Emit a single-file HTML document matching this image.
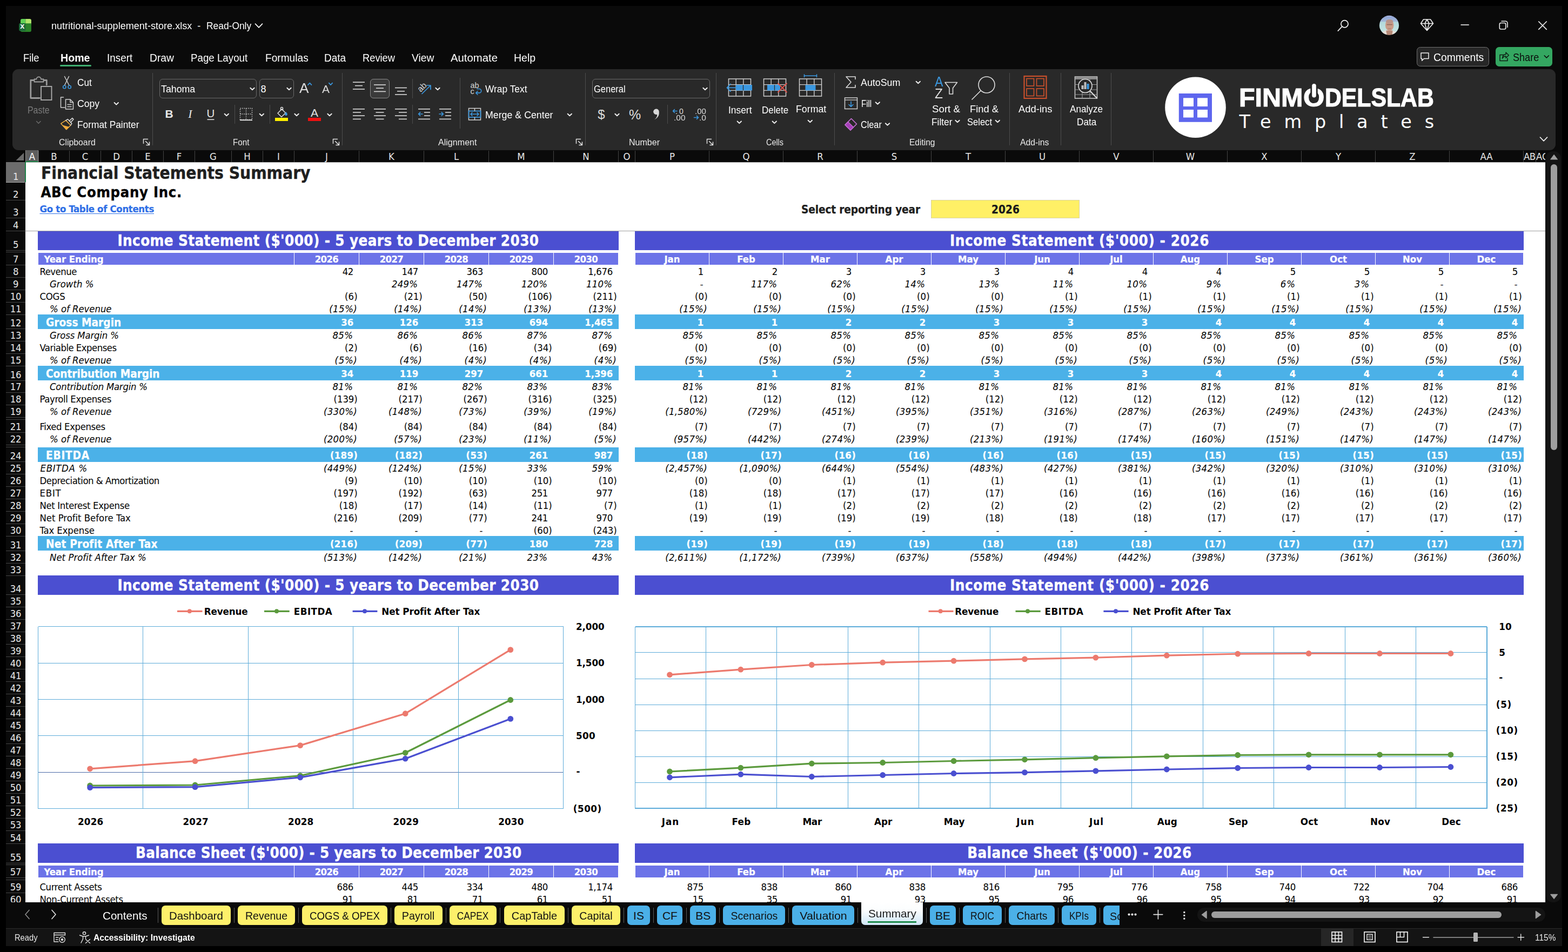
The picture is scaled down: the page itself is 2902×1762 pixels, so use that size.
<!DOCTYPE html>
<html lang="en"><head><meta charset="utf-8"><title>nutritional-supplement-store.xlsx - Excel</title>
<style>
html,body{margin:0;padding:0;background:#000;}
body{width:2902px;height:1762px;position:relative;overflow:hidden;font-family:"Liberation Sans", sans-serif;}
body div,body svg{position:absolute;box-sizing:border-box;}
svg{overflow:visible;}
.t{white-space:pre;line-height:1;font-family:"Liberation Sans", sans-serif;}
.h{font-family:"DejaVu Sans Condensed", "DejaVu Sans", "Liberation Sans", sans-serif;}.d{font-family:"DejaVu Sans", "Liberation Sans", sans-serif;}.s{font-family:"Liberation Serif", serif;}
#app{left:0;top:0;width:2902px;height:1762px;overflow:hidden;background:#000;}
</style></head><body>
<div id="app">
<div style="left:11px;top:11px;width:2880px;height:1739.5px;background:#0a0a0a;"></div>
<div class="t" style="top:38.80px;font-size:18px;color:#fff;left:95.00px;transform:scaleX(1.0045);transform-origin:0 50%;">nutritional-supplement-store.xlsx</div>
<div class="t" style="top:38.80px;font-size:18px;color:#fff;left:365.30px;">-</div>
<div class="t" style="top:38.80px;font-size:18px;color:#fff;left:381.80px;transform:scaleX(0.9669);transform-origin:0 50%;">Read-Only</div>
<div class="t" style="top:96.80px;font-size:20px;color:#fff;left:42.50px;transform:scaleX(0.9152);transform-origin:0 50%;">File</div>
<div class="t" style="top:96.80px;font-size:20px;color:#fff;left:111.80px;font-weight:bold;transform:scaleX(0.9806);transform-origin:0 50%;">Home</div>
<div class="t" style="top:96.80px;font-size:20px;color:#fff;left:198.30px;transform:scaleX(0.9434);transform-origin:0 50%;">Insert</div>
<div class="t" style="top:96.80px;font-size:20px;color:#fff;left:277.00px;transform:scaleX(0.9642);transform-origin:0 50%;">Draw</div>
<div class="t" style="top:96.80px;font-size:20px;color:#fff;left:353.30px;transform:scaleX(0.9365);transform-origin:0 50%;">Page Layout</div>
<div class="t" style="top:96.80px;font-size:20px;color:#fff;left:491.30px;transform:scaleX(0.9561);transform-origin:0 50%;">Formulas</div>
<div class="t" style="top:96.80px;font-size:20px;color:#fff;left:600.30px;transform:scaleX(0.9515);transform-origin:0 50%;">Data</div>
<div class="t" style="top:96.80px;font-size:20px;color:#fff;left:671.30px;transform:scaleX(0.9149);transform-origin:0 50%;">Review</div>
<div class="t" style="top:96.80px;font-size:20px;color:#fff;left:762.00px;transform:scaleX(0.9605);transform-origin:0 50%;">View</div>
<div class="t" style="top:96.80px;font-size:20px;color:#fff;left:834.30px;transform:scaleX(1.0162);transform-origin:0 50%;">Automate</div>
<div class="t" style="top:96.80px;font-size:20px;color:#fff;left:951.30px;transform:scaleX(0.9771);transform-origin:0 50%;">Help</div>
<div style="left:111px;top:120px;width:58px;height:3.2px;background:#3fae70;border-radius:2px;"></div>
<div style="left:2621.5px;top:87.2px;width:134px;height:35.5px;background:#272727;border:1px solid #707070;border-radius:6.5px;"></div>
<div class="t" style="top:96.50px;font-size:19.5px;color:#fff;left:2652.80px;transform:scaleX(0.9885);transform-origin:0 50%;">Comments</div>
<div style="left:2768px;top:87px;width:105px;height:35.7px;background:#34a761;border-radius:6.5px;"></div>
<div class="t" style="top:96.50px;font-size:19.5px;color:#0b0b0b;left:2799.80px;transform:scaleX(0.9261);transform-origin:0 50%;">Share</div>
<div style="left:23px;top:128px;width:2856px;height:150px;background:#292929;border-radius:11px;"></div>
<div class="t" style="top:194.50px;font-size:18px;color:#7a7a7a;left:51.30px;transform:scaleX(0.8842);transform-origin:0 50%;">Paste</div>
<div class="t" style="top:143.80px;font-size:18px;color:#ffffff;left:142.50px;transform:scaleX(0.9566);transform-origin:0 50%;">Cut</div>
<div class="t" style="top:183.30px;font-size:18px;color:#ffffff;left:142.50px;transform:scaleX(0.9755);transform-origin:0 50%;">Copy</div>
<div class="t" style="top:222.30px;font-size:18px;color:#ffffff;left:142.50px;transform:scaleX(0.9618);transform-origin:0 50%;">Format Painter</div>
<div class="t" style="top:255.00px;font-size:17px;color:#e8e8e8;left:109.30px;transform:scaleX(0.9304);transform-origin:0 50%;">Clipboard</div>
<div style="left:281.9px;top:135px;width:1.3px;height:134px;background:#4d4d4d;"></div>
<div style="left:295.3px;top:146.3px;width:180px;height:35.5px;background:#292929;border:1px solid #6a6a6a;border-radius:6px;"></div>
<div class="t" style="top:156.30px;font-size:18px;color:#ffffff;left:298.30px;transform:scaleX(0.9868);transform-origin:0 50%;">Tahoma</div>
<div style="left:479.5px;top:146.3px;width:64px;height:35.5px;background:#292929;border:1px solid #6a6a6a;border-radius:6px;"></div>
<div class="t" style="top:156.30px;font-size:18px;color:#ffffff;left:482.50px;">8</div>
<div class="t" style="top:150.50px;font-size:25.5px;color:#dcdcdc;left:554.00px;transform:scaleX(1.0285);transform-origin:0 50%;">A</div>
<div class="t" style="top:153.50px;font-size:21px;color:#dcdcdc;left:595.50px;transform:scaleX(0.9989);transform-origin:0 50%;">A</div>
<div class="t" style="top:200.00px;font-size:21px;color:#e8e8e8;left:-287.00px;width:1200px;text-align:center;font-weight:bold;">B</div>
<div class="t" style="left:-248px;width:1200px;text-align:center;top:199.74px;font-size:22px;color:#e8e8e8;font-family:'Liberation Serif',serif;font-style:italic;">I</div>
<div class="t" style="top:200.30px;font-size:20.5px;color:#e8e8e8;left:-210.00px;width:1200px;text-align:center;">U</div>
<div style="left:433.9px;top:194px;width:1.3px;height:35px;background:#4d4d4d;"></div>
<div style="left:498.7px;top:194px;width:1.3px;height:35px;background:#4d4d4d;"></div>
<div style="left:509px;top:218.2px;width:24px;height:5.6px;background:#ffee00;"></div>
<div class="t" style="top:198.00px;font-size:21px;color:#e0e0e0;left:-18.00px;width:1200px;text-align:center;">A</div>
<div style="left:570px;top:218.2px;width:24px;height:5.6px;background:#ee1111;"></div>
<div class="t" style="top:255.00px;font-size:17px;color:#e8e8e8;left:430.50px;transform:scaleX(0.8962);transform-origin:0 50%;">Font</div>
<div style="left:632.6999999999999px;top:135px;width:1.3px;height:134px;background:#4d4d4d;"></div>
<div style="left:685.3px;top:146.3px;width:35.5px;height:35.5px;background:#3a3a3a;border:1px solid #8a8a8a;border-radius:6px;"></div>
<div style="left:762.6999999999999px;top:146px;width:1.3px;height:36px;background:#4d4d4d;"></div>
<div class="t" style="top:153.00px;font-size:15.5px;color:#d6d6d6;left:181.50px;width:1200px;text-align:center;transform:rotate(-45deg);transform-origin:50% 60%;">ab</div>
<div style="left:850.6999999999999px;top:144px;width:1.3px;height:93.5px;background:#4d4d4d;"></div>
<div class="t" style="top:151.30px;font-size:14.5px;color:#d6d6d6;left:870.50px;">ab</div>
<div class="t" style="top:162.30px;font-size:14.5px;color:#d6d6d6;left:870.50px;">c</div>
<div class="t" style="top:156.30px;font-size:18px;color:#ffffff;left:897.50px;transform:scaleX(0.9642);transform-origin:0 50%;">Wrap Text</div>
<div style="left:762.6999999999999px;top:194px;width:1.3px;height:35px;background:#4d4d4d;"></div>
<div class="t" style="top:204.20px;font-size:18px;color:#ffffff;left:897.50px;transform:scaleX(0.9877);transform-origin:0 50%;">Merge &amp; Center</div>
<div class="t" style="top:255.00px;font-size:17px;color:#e8e8e8;left:810.50px;transform:scaleX(0.9456);transform-origin:0 50%;">Alignment</div>
<div style="left:1082.9px;top:135px;width:1.3px;height:134px;background:#4d4d4d;"></div>
<div style="left:1096.2px;top:146.3px;width:217.5px;height:35.5px;background:#292929;border:1px solid #6a6a6a;border-radius:6px;"></div>
<div class="t" style="top:156.30px;font-size:18px;color:#ffffff;left:1099.40px;transform:scaleX(0.9150);transform-origin:0 50%;">General</div>
<div class="t" style="top:200.00px;font-size:24px;color:#dcdcdc;left:513.00px;width:1200px;text-align:center;">$</div>
<div class="t" style="top:199.50px;font-size:25px;color:#dcdcdc;left:575.00px;width:1200px;text-align:center;">%</div>
<div style="left:1234.9px;top:194px;width:1.3px;height:35px;background:#4d4d4d;"></div>
<div class="t" style="top:198.50px;font-size:14px;color:#dcdcdc;left:1250.00px;letter-spacing:3.156px;">.0</div>
<div class="t" style="top:210.50px;font-size:14px;color:#dcdcdc;left:1246.50px;transform:scaleX(1.1043);transform-origin:0 50%;">.00</div>
<div class="t" style="top:198.50px;font-size:14px;color:#dcdcdc;left:1286.00px;transform:scaleX(1.0787);transform-origin:0 50%;">.00</div>
<div class="t" style="top:210.50px;font-size:14px;color:#dcdcdc;left:1294.00px;transform:scaleX(1.1123);transform-origin:0 50%;">.0</div>
<div class="t" style="top:255.00px;font-size:17px;color:#e8e8e8;left:1163.50px;transform:scaleX(0.9426);transform-origin:0 50%;">Number</div>
<div style="left:1325.1000000000001px;top:135px;width:1.3px;height:134px;background:#4d4d4d;"></div>
<div class="t" style="top:194.50px;font-size:18.5px;color:#ffffff;left:1347.50px;transform:scaleX(0.9399);transform-origin:0 50%;">Insert</div>
<div class="t" style="top:194.50px;font-size:18.5px;color:#ffffff;left:1409.50px;transform:scaleX(0.9218);transform-origin:0 50%;">Delete</div>
<div class="t" style="top:193.00px;font-size:18.5px;color:#ffffff;left:1472.50px;transform:scaleX(0.9609);transform-origin:0 50%;">Format</div>
<div class="t" style="top:255.00px;font-size:17px;color:#e8e8e8;left:1418.00px;transform:scaleX(0.8466);transform-origin:0 50%;">Cells</div>
<div style="left:1543.9px;top:135px;width:1.3px;height:134px;background:#4d4d4d;"></div>
<div class="t" style="top:143.80px;font-size:18px;color:#ffffff;left:1593.00px;transform:scaleX(0.9899);transform-origin:0 50%;">AutoSum</div>
<div class="t" style="top:182.50px;font-size:18px;color:#ffffff;left:1593.80px;transform:scaleX(0.8348);transform-origin:0 50%;">Fill</div>
<div class="t" style="top:222.00px;font-size:18px;color:#ffffff;left:1593.00px;transform:scaleX(0.9020);transform-origin:0 50%;">Clear</div>
<div class="t" style="top:139.00px;font-size:25px;color:#3b98e0;left:1729.50px;transform:scaleX(0.9288);transform-origin:0 50%;">A</div>
<div class="t" style="top:160.50px;font-size:25px;color:#dcdcdc;left:1729.50px;transform:scaleX(0.9816);transform-origin:0 50%;">Z</div>
<div class="t" style="top:193.00px;font-size:18.5px;color:#ffffff;left:1725.00px;transform:scaleX(1.0112);transform-origin:0 50%;">Sort &amp;</div>
<div class="t" style="top:216.80px;font-size:18.5px;color:#ffffff;left:1724.00px;transform:scaleX(0.9362);transform-origin:0 50%;">Filter</div>
<div class="t" style="top:193.00px;font-size:18.5px;color:#ffffff;left:1795.00px;transform:scaleX(0.9912);transform-origin:0 50%;">Find &amp;</div>
<div class="t" style="top:216.80px;font-size:18.5px;color:#ffffff;left:1790.00px;transform:scaleX(0.8946);transform-origin:0 50%;">Select</div>
<div class="t" style="top:255.00px;font-size:17px;color:#e8e8e8;left:1682.50px;transform:scaleX(0.9137);transform-origin:0 50%;">Editing</div>
<div style="left:1867.7px;top:135px;width:1.3px;height:134px;background:#4d4d4d;"></div>
<div class="t" style="top:193.00px;font-size:18.5px;color:#ffffff;left:1885.00px;transform:scaleX(0.9963);transform-origin:0 50%;">Add-ins</div>
<div class="t" style="top:255.00px;font-size:17px;color:#e8e8e8;left:1888.00px;transform:scaleX(0.9282);transform-origin:0 50%;">Add-ins</div>
<div style="left:1962.7px;top:135px;width:1.3px;height:134px;background:#4d4d4d;"></div>
<div class="t" style="top:193.00px;font-size:18.5px;color:#ffffff;left:1980.00px;transform:scaleX(0.9267);transform-origin:0 50%;">Analyze</div>
<div class="t" style="top:216.80px;font-size:18.5px;color:#ffffff;left:1992.50px;transform:scaleX(0.9289);transform-origin:0 50%;">Data</div>
<div style="left:2055.9px;top:135px;width:1.3px;height:134px;background:#4d4d4d;"></div>
<div class="t" style="top:157.00px;font-size:48px;color:#fff;left:2293.30px;font-weight:bold;transform:scaleX(1.0101);transform-origin:0 50%;-webkit-text-stroke:1.1px #fff;">FINM</div>
<div class="t" style="top:157.00px;font-size:48px;color:#fff;left:2412.30px;font-weight:bold;transform:scaleX(1.0551);transform-origin:0 50%;-webkit-text-stroke:1.1px #fff;">O</div>
<div class="t" style="top:157.00px;font-size:48px;color:#fff;left:2452.20px;font-weight:bold;transform:scaleX(0.8903);transform-origin:0 50%;-webkit-text-stroke:1.1px #fff;">DELSLAB</div>
<div class="t d" style="top:209.00px;font-size:33.5px;color:#fff;left:2293.50px;letter-spacing:23.797px;">Templates</div>
<svg style="left:0px;top:0px;pointer-events:none;" width="2902" height="1762" viewBox="0 0 2902 1762"><path d="M38 46 V37.7 a2.8 2.8 0 0 1 2.8 -2.8 H47.3 V46 Z" fill="#5fd155"/><path d="M47.3 34.9 H55.1 a2.8 2.8 0 0 1 2.8 2.8 V46 H47.3 Z" fill="#b3e66c"/><path d="M38 43.3 H57.9 V56.2 a2.7 2.7 0 0 1 -2.7 2.7 H40.7 a2.7 2.7 0 0 1 -2.7 -2.7 Z" fill="#2b8429"/><rect x="35.1" y="42.9" width="12.5" height="14.5" rx="2.4" fill="#1d6a39"/><path d="M472.5 44.2 L479.0 50.8 L485.5 44.2" fill="none" stroke="#fff" stroke-width="1.7" stroke-linecap="round" stroke-linejoin="round"/><circle cx="2488.5" cy="44.3" r="6.6" fill="none" stroke="#f0f0f0" stroke-width="1.7"/><line x1="2483.8" y1="49.2" x2="2476.3" y2="57.2" stroke="#f0f0f0" stroke-width="1.7" stroke-linecap="round"/><defs><clipPath id="av"><circle cx="2571" cy="46.9" r="18.1"/></clipPath><linearGradient id="sky" x1="0" y1="0" x2="0" y2="1"><stop offset="0" stop-color="#c9cdea"/><stop offset="0.3" stop-color="#93a6d6"/><stop offset="1" stop-color="#a6bcd9"/></linearGradient><linearGradient id="sea" x1="0" y1="0" x2="0" y2="1"><stop offset="0" stop-color="#b2d8dc"/><stop offset="1" stop-color="#cde9e4"/></linearGradient><filter id="avb" x="-10%" y="-10%" width="120%" height="120%"><feGaussianBlur stdDeviation="0.7"/></filter></defs><g clip-path="url(#av)"><g filter="url(#avb)"><rect x="2551" y="27" width="40" height="14" fill="url(#sky)"/><rect x="2551" y="40.3" width="40" height="27" fill="url(#sea)"/><ellipse cx="2571" cy="68" rx="17" ry="12.5" fill="#e6e1da"/><path d="M2565.3 56.5 L2577.6 56.5 L2576.3 66 L2567 66 Z" fill="#b58a78"/><ellipse cx="2571.7" cy="46.6" rx="7.8" ry="10.6" fill="#c99c89"/><ellipse cx="2571.7" cy="39.5" rx="6.6" ry="3.6" fill="#b9948a"/><rect x="2566.3" y="44.6" width="10.8" height="2" rx="1" fill="#6e4a3e" opacity="0.5"/><rect x="2568.6" y="52.4" width="6" height="1.3" rx=".6" fill="#8a5a4c" opacity="0.45"/></g></g><path d="M2634.5 36 H2647.5 L2652.5 43.5 L2641 56.5 L2629.5 43.5 Z M2629.5 43.5 H2652.5 M2637 43.5 L2641 36 L2645 43.5 L2641 56.5 Z" fill="none" stroke="#f0f0f0" stroke-width="1.6" stroke-linejoin="round" stroke-linecap="round" /><line x1="2703.5" y1="46" x2="2718.8" y2="46" stroke="#f0f0f0" stroke-width="1.6" stroke-linecap="butt"/><rect x="2775.3" y="42.5" width="11.5" height="11.5" rx="2.5" fill="none" stroke="#f0f0f0" stroke-width="1.6"/><path d="M2779 39.3 H2786.5 a3.5 3.5 0 0 1 3.5 3.5 V50.5" fill="none" stroke="#f0f0f0" stroke-width="1.6" stroke-linejoin="round" stroke-linecap="round" /><line x1="2847.3" y1="39.5" x2="2862.7" y2="54.8" stroke="#f0f0f0" stroke-width="1.7" stroke-linecap="butt"/><line x1="2862.7" y1="39.5" x2="2847.3" y2="54.8" stroke="#f0f0f0" stroke-width="1.7" stroke-linecap="butt"/><path d="M2630 98 H2644 V108.5 H2635.5 L2631.7 112.2 V108.5 H2630 Z" fill="none" stroke="#f0f0f0" stroke-width="1.5" stroke-linejoin="round" stroke-linecap="round" /><path d="M2783 101.5 H2776 V112.5 H2790 V108 M2780.5 108 C2781 102.5 2784 100.5 2787 100.5 V97 L2792.3 102.3 L2787 107.3 V104 C2784.5 104 2782.3 105 2780.5 108 Z" fill="none" stroke="#0d1f14" stroke-width="1.5" stroke-linejoin="round" stroke-linecap="round" /><path d="M2858.3 103.0 L2862.3 107.0 L2866.3 103.0" fill="none" stroke="#0b0b0b" stroke-width="1.7" stroke-linecap="round" stroke-linejoin="round"/><path d="M62 148.5 H56.8 V181.5 H73.5 M82 148.5 H86.3 V157" fill="none" stroke="#9a9a9a" stroke-width="2.8" stroke-linejoin="round" stroke-linecap="round" /><path d="M63.5 151.5 V146.5 H67.5 a4.2 4.2 0 0 1 8.4 0 H80.5 V151.5 Z" fill="none" stroke="#a0a0a0" stroke-width="1.8" stroke-linejoin="round" stroke-linecap="round" /><rect x="76" y="160" width="19.5" height="25" rx="0" fill="none" stroke="#b0b0b0" stroke-width="1.8"/><path d="M67.6 224.5 L71.3 228.2 L75.0 224.5" fill="none" stroke="#6a6a6a" stroke-width="1.6" stroke-linecap="round" stroke-linejoin="round"/><path d="M119.5 141.5 L128 158 M127.5 141.5 L119.5 158" fill="none" stroke="#cfcfcf" stroke-width="1.5" stroke-linejoin="round" stroke-linecap="round" /><circle cx="119.3" cy="161" r="2.7" fill="none" stroke="#3b98e0" stroke-width="1.6"/><circle cx="128.7" cy="161" r="2.7" fill="none" stroke="#3b98e0" stroke-width="1.6"/><path d="M117.5 180 H112.5 V199 H120" fill="none" stroke="#cfcfcf" stroke-width="1.5" stroke-linejoin="round" stroke-linecap="round" /><path d="M121.5 184 H130 L135.5 189.5 V202 H121.5 Z M130 184 V189.5 H135.5 M125 193.5 H132 M125 197.5 H132" fill="none" stroke="#cfcfcf" stroke-width="1.5" stroke-linejoin="round" stroke-linecap="round" /><path d="M211.6 190.0 L215.3 193.7 L219.0 190.0" fill="none" stroke="#f0f0f0" stroke-width="1.9" stroke-linecap="round" stroke-linejoin="round"/><path d="M112.8 228.7 L121.8 222.9 L130.8 231.8 L122.9 239.7 Z" fill="none" stroke="#f2b040" stroke-width="1.5" stroke-linejoin="round" stroke-linecap="round" /><path d="M116.5 232.3 L127.3 235.2 L122.9 239.7 Z" fill="#f2a93a" stroke="#f2b040" stroke-width="1" stroke-linejoin="round" stroke-linecap="round" /><path d="M121.8 222.9 L125.5 220.7 L132.9 228.7 L130.8 231.8" fill="none" stroke="#e0e0e0" stroke-width="1.5" stroke-linejoin="round" stroke-linecap="round" /><path d="M128.3 223.8 L133.8 218.6 L136 220.8 L131 226.5" fill="none" stroke="#e0e0e0" stroke-width="1.5" stroke-linejoin="round" stroke-linecap="round" /><path d="M273.5 257.5 H265.5 V265.5" fill="none" stroke="#e0e0e0" stroke-width="1.5" stroke-linejoin="round" stroke-linecap="round" /><path d="M269.5 261.5 L276.5 268.5 M276.5 263.0 V268.5 H271.0" fill="none" stroke="#e0e0e0" stroke-width="1.5" stroke-linejoin="round" stroke-linecap="round" /><path d="M463.3 162.7 L467.0 166.3 L470.7 162.7" fill="none" stroke="#f0f0f0" stroke-width="1.9" stroke-linecap="round" stroke-linejoin="round"/><path d="M531.3 162.7 L535.0 166.3 L538.7 162.7" fill="none" stroke="#f0f0f0" stroke-width="1.9" stroke-linecap="round" stroke-linejoin="round"/><path d="M570.0 157.1 L573.3 153.6 L576.5 157.1" fill="none" stroke="#3b98e0" stroke-width="1.7" stroke-linecap="round" stroke-linejoin="round"/><path d="M608.8 153.6 L612.0 157.1 L615.2 153.6" fill="none" stroke="#3b98e0" stroke-width="1.7" stroke-linecap="round" stroke-linejoin="round"/><line x1="383.5" y1="221.3" x2="396.5" y2="221.3" stroke="#e8e8e8" stroke-width="1.5" stroke-linecap="butt"/><path d="M415.6 210.7 L419.3 214.3 L423.0 210.7" fill="none" stroke="#f0f0f0" stroke-width="1.9" stroke-linecap="round" stroke-linejoin="round"/><rect x="444.5" y="200.5" width="22" height="21" fill="none" stroke="#cfcfcf" stroke-width="1.4" stroke-dasharray="1.6 2"/><line x1="444" y1="222.3" x2="467" y2="222.3" stroke="#e6e6e6" stroke-width="1.8" stroke-linecap="butt"/><path d="M455.5 201 V221 M445 211 H466" fill="none" stroke="#cfcfcf" stroke-width="1.3" stroke-dasharray="1.6 2"/><path d="M480.6 210.7 L484.3 214.3 L488.0 210.7" fill="none" stroke="#f0f0f0" stroke-width="1.9" stroke-linecap="round" stroke-linejoin="round"/><path d="M514 209.5 L521.5 202 L528.5 209 L521 216.5 Z M519.5 204 V200.5 a2 2 0 0 1 4 0 V204" fill="none" stroke="#e0e0e0" stroke-width="1.5" stroke-linejoin="round" stroke-linecap="round" /><path d="M529.5 207 c1.5 2 2.3 3.3 2.3 4.7 a2.3 2.3 0 0 1 -4.6 0 c0 -1.4 .8 -2.7 2.3 -4.7z" fill="#3b98e0" stroke="none" stroke-width="0" stroke-linejoin="round" stroke-linecap="round" /><path d="M545.3 210.7 L549.0 214.3 L552.7 210.7" fill="none" stroke="#f0f0f0" stroke-width="1.9" stroke-linecap="round" stroke-linejoin="round"/><path d="M606.3 210.7 L610.0 214.3 L613.7 210.7" fill="none" stroke="#f0f0f0" stroke-width="1.9" stroke-linecap="round" stroke-linejoin="round"/><path d="M624.5 257.5 H616.5 V265.5" fill="none" stroke="#e0e0e0" stroke-width="1.5" stroke-linejoin="round" stroke-linecap="round" /><path d="M620.5 261.5 L627.5 268.5 M627.5 263.0 V268.5 H622.0" fill="none" stroke="#e0e0e0" stroke-width="1.5" stroke-linejoin="round" stroke-linecap="round" /><line x1="653" y1="152.2" x2="675" y2="152.2" stroke="#dadada" stroke-width="1.6" stroke-linecap="butt"/><line x1="657" y1="158.6" x2="671" y2="158.6" stroke="#dadada" stroke-width="1.6" stroke-linecap="butt"/><line x1="653" y1="165" x2="675" y2="165" stroke="#dadada" stroke-width="1.6" stroke-linecap="butt"/><line x1="692" y1="157" x2="714" y2="157" stroke="#dadada" stroke-width="1.6" stroke-linecap="butt"/><line x1="696" y1="163.2" x2="710" y2="163.2" stroke="#dadada" stroke-width="1.6" stroke-linecap="butt"/><line x1="692" y1="169.4" x2="714" y2="169.4" stroke="#dadada" stroke-width="1.6" stroke-linecap="butt"/><line x1="731" y1="162.5" x2="753" y2="162.5" stroke="#dadada" stroke-width="1.6" stroke-linecap="butt"/><line x1="735" y1="168.8" x2="749" y2="168.8" stroke="#dadada" stroke-width="1.6" stroke-linecap="butt"/><line x1="731" y1="175" x2="753" y2="175" stroke="#dadada" stroke-width="1.6" stroke-linecap="butt"/><path d="M781 173.5 L796.5 158.5 M789.5 158 H797 V165.5" fill="none" stroke="#3b98e0" stroke-width="1.7" stroke-linejoin="round" stroke-linecap="round" /><path d="M806.3 162.7 L810.0 166.3 L813.7 162.7" fill="none" stroke="#f0f0f0" stroke-width="1.9" stroke-linecap="round" stroke-linejoin="round"/><path d="M883 164.5 H887 a3.7 3.7 0 0 1 0 7.4 H881 M884 168.8 L880.7 172 L884 175.2" fill="none" stroke="#3b98e0" stroke-width="1.6" stroke-linejoin="round" stroke-linecap="round" /><line x1="653" y1="201.8" x2="675" y2="201.8" stroke="#dadada" stroke-width="1.6" stroke-linecap="butt"/><line x1="653" y1="208" x2="668" y2="208" stroke="#dadada" stroke-width="1.6" stroke-linecap="butt"/><line x1="653" y1="214.2" x2="675" y2="214.2" stroke="#dadada" stroke-width="1.6" stroke-linecap="butt"/><line x1="653" y1="220.4" x2="668" y2="220.4" stroke="#dadada" stroke-width="1.6" stroke-linecap="butt"/><line x1="692" y1="201.8" x2="714" y2="201.8" stroke="#dadada" stroke-width="1.6" stroke-linecap="butt"/><line x1="695.5" y1="208" x2="710.5" y2="208" stroke="#dadada" stroke-width="1.6" stroke-linecap="butt"/><line x1="692" y1="214.2" x2="714" y2="214.2" stroke="#dadada" stroke-width="1.6" stroke-linecap="butt"/><line x1="695.5" y1="220.4" x2="710.5" y2="220.4" stroke="#dadada" stroke-width="1.6" stroke-linecap="butt"/><line x1="731" y1="201.8" x2="753" y2="201.8" stroke="#dadada" stroke-width="1.6" stroke-linecap="butt"/><line x1="738" y1="208" x2="753" y2="208" stroke="#dadada" stroke-width="1.6" stroke-linecap="butt"/><line x1="731" y1="214.2" x2="753" y2="214.2" stroke="#dadada" stroke-width="1.6" stroke-linecap="butt"/><line x1="738" y1="220.4" x2="753" y2="220.4" stroke="#dadada" stroke-width="1.6" stroke-linecap="butt"/><line x1="774" y1="201.8" x2="796" y2="201.8" stroke="#dadada" stroke-width="1.6" stroke-linecap="butt"/><line x1="774" y1="220.4" x2="796" y2="220.4" stroke="#dadada" stroke-width="1.6" stroke-linecap="butt"/><line x1="785" y1="208" x2="796" y2="208" stroke="#dadada" stroke-width="1.6" stroke-linecap="butt"/><line x1="785" y1="214.2" x2="796" y2="214.2" stroke="#dadada" stroke-width="1.6" stroke-linecap="butt"/><path d="M782 211 H774.5 M777.8 207.7 L774.5 211 L777.8 214.3" fill="none" stroke="#3b98e0" stroke-width="1.6" stroke-linejoin="round" stroke-linecap="round" /><line x1="813" y1="201.8" x2="835" y2="201.8" stroke="#dadada" stroke-width="1.6" stroke-linecap="butt"/><line x1="813" y1="220.4" x2="835" y2="220.4" stroke="#dadada" stroke-width="1.6" stroke-linecap="butt"/><line x1="824" y1="208" x2="835" y2="208" stroke="#dadada" stroke-width="1.6" stroke-linecap="butt"/><line x1="824" y1="214.2" x2="835" y2="214.2" stroke="#dadada" stroke-width="1.6" stroke-linecap="butt"/><path d="M813 211 H820.5 M817.2 207.7 L820.5 211 L817.2 214.3" fill="none" stroke="#3b98e0" stroke-width="1.6" stroke-linejoin="round" stroke-linecap="round" /><rect x="867.5" y="200.5" width="22" height="21.5" rx="0" fill="none" stroke="#d0d0d0" stroke-width="1.5"/><rect x="867.5" y="205.5" width="22" height="11.5" rx="0" fill="none" stroke="#3b98e0" stroke-width="1.7"/><line x1="878.5" y1="200.5" x2="878.5" y2="205.5" stroke="#d0d0d0" stroke-width="1.5" stroke-linecap="butt"/><line x1="878.5" y1="217" x2="878.5" y2="222" stroke="#d0d0d0" stroke-width="1.5" stroke-linecap="butt"/><path d="M871 211.3 H886 M874 208.3 L871 211.3 L874 214.3 M883 208.3 L886 211.3 L883 214.3" fill="none" stroke="#3b98e0" stroke-width="1.5" stroke-linejoin="round" stroke-linecap="round" /><path d="M1050.6 210.7 L1054.3 214.3 L1058.0 210.7" fill="none" stroke="#f0f0f0" stroke-width="1.9" stroke-linecap="round" stroke-linejoin="round"/><path d="M1074.5 257.5 H1066.5 V265.5" fill="none" stroke="#e0e0e0" stroke-width="1.5" stroke-linejoin="round" stroke-linecap="round" /><path d="M1070.5 261.5 L1077.5 268.5 M1077.5 263.0 V268.5 H1072.0" fill="none" stroke="#e0e0e0" stroke-width="1.5" stroke-linejoin="round" stroke-linecap="round" /><path d="M1301.3 162.7 L1305.0 166.3 L1308.7 162.7" fill="none" stroke="#f0f0f0" stroke-width="1.9" stroke-linecap="round" stroke-linejoin="round"/><path d="M1138.3 210.7 L1142.0 214.3 L1145.7 210.7" fill="none" stroke="#f0f0f0" stroke-width="1.9" stroke-linecap="round" stroke-linejoin="round"/><path d="M1214.5 201.5 a5.3 5.3 0 1 1 -5.2 6.3 a5.3 5.3 0 0 1 5.2 -6.3 z M1219.6 206 c1.2 7 -2 12.5 -8.6 15.2 c4.3 -3 5.6 -6.3 5 -9.5 z" fill="#d8d8d8" stroke="none" stroke-width="0" stroke-linejoin="round" stroke-linecap="round" /><path d="M1253 205.5 H1245.5 M1248.5 202.5 L1245.5 205.5 L1248.5 208.5" fill="none" stroke="#3b98e0" stroke-width="1.6" stroke-linejoin="round" stroke-linecap="round" /><path d="M1284.5 217.5 H1292.5 M1289.5 214.5 L1292.5 217.5 L1289.5 220.5" fill="none" stroke="#3b98e0" stroke-width="1.6" stroke-linejoin="round" stroke-linecap="round" /><path d="M1316.5 257.5 H1308.5 V265.5" fill="none" stroke="#e0e0e0" stroke-width="1.5" stroke-linejoin="round" stroke-linecap="round" /><path d="M1312.5 261.5 L1319.5 268.5 M1319.5 263.0 V268.5 H1314.0" fill="none" stroke="#e0e0e0" stroke-width="1.5" stroke-linejoin="round" stroke-linecap="round" /><rect x="1348.5" y="146" width="41" height="32" rx="0" fill="none" stroke="#cfcfcf" stroke-width="1.5"/><line x1="1362.1666666666667" y1="146" x2="1362.1666666666667" y2="178" stroke="#cfcfcf" stroke-width="1.4" stroke-linecap="butt"/><line x1="1375.8333333333333" y1="146" x2="1375.8333333333333" y2="178" stroke="#cfcfcf" stroke-width="1.4" stroke-linecap="butt"/><line x1="1348.5" y1="156.66666666666666" x2="1389.5" y2="156.66666666666666" stroke="#cfcfcf" stroke-width="1.4" stroke-linecap="butt"/><line x1="1348.5" y1="167.33333333333334" x2="1389.5" y2="167.33333333333334" stroke="#cfcfcf" stroke-width="1.4" stroke-linecap="butt"/><rect x="1362" y="157" width="30" height="10.5" fill="#3b98e0"/><line x1="1375.5" y1="157" x2="1375.5" y2="167.5" stroke="#292929" stroke-width="1.2" stroke-linecap="butt"/><path d="M1362 162.3 H1346 M1352 155.5 L1345.5 162.3 L1352 169" fill="none" stroke="#3b98e0" stroke-width="1.8" stroke-linejoin="round" stroke-linecap="round" /><path d="M1364.6 224.5 L1368.3 228.2 L1372.0 224.5" fill="none" stroke="#f0f0f0" stroke-width="1.9" stroke-linecap="round" stroke-linejoin="round"/><rect x="1413.5" y="146" width="41" height="32" rx="0" fill="none" stroke="#cfcfcf" stroke-width="1.5"/><line x1="1427.1666666666667" y1="146" x2="1427.1666666666667" y2="178" stroke="#cfcfcf" stroke-width="1.4" stroke-linecap="butt"/><line x1="1440.8333333333333" y1="146" x2="1440.8333333333333" y2="178" stroke="#cfcfcf" stroke-width="1.4" stroke-linecap="butt"/><line x1="1413.5" y1="156.66666666666666" x2="1454.5" y2="156.66666666666666" stroke="#cfcfcf" stroke-width="1.4" stroke-linecap="butt"/><line x1="1413.5" y1="167.33333333333334" x2="1454.5" y2="167.33333333333334" stroke="#cfcfcf" stroke-width="1.4" stroke-linecap="butt"/><rect x="1420" y="157" width="24" height="10.5" fill="#3b98e0"/><line x1="1433.5" y1="157" x2="1433.5" y2="167.5" stroke="#292929" stroke-width="1.2" stroke-linecap="butt"/><path d="M1440 154.5 L1456 170.5 M1456 154.5 L1440 170.5" fill="none" stroke="#e0524a" stroke-width="1.9" stroke-linejoin="round" stroke-linecap="round" /><path d="M1429.6 224.5 L1433.3 228.2 L1437.0 224.5" fill="none" stroke="#f0f0f0" stroke-width="1.9" stroke-linecap="round" stroke-linejoin="round"/><rect x="1479.5" y="146" width="41" height="32" rx="0" fill="none" stroke="#cfcfcf" stroke-width="1.5"/><line x1="1493.1666666666667" y1="146" x2="1493.1666666666667" y2="178" stroke="#cfcfcf" stroke-width="1.4" stroke-linecap="butt"/><line x1="1506.8333333333333" y1="146" x2="1506.8333333333333" y2="178" stroke="#cfcfcf" stroke-width="1.4" stroke-linecap="butt"/><line x1="1479.5" y1="156.66666666666666" x2="1520.5" y2="156.66666666666666" stroke="#cfcfcf" stroke-width="1.4" stroke-linecap="butt"/><line x1="1479.5" y1="167.33333333333334" x2="1520.5" y2="167.33333333333334" stroke="#cfcfcf" stroke-width="1.4" stroke-linecap="butt"/><rect x="1490.5" y="157.3" width="19" height="10" fill="#3b98e0"/><path d="M1488.5 140.3 H1511.5 M1488.5 138 V142.6 M1511.5 138 V142.6" fill="none" stroke="#3b98e0" stroke-width="1.6" stroke-linejoin="round" stroke-linecap="round" /><path d="M1495.6 222.7 L1499.3 226.3 L1503.0 222.7" fill="none" stroke="#f0f0f0" stroke-width="1.9" stroke-linecap="round" stroke-linejoin="round"/><path d="M1583 146.5 V142 H1566 L1575 152 L1566 162 H1583 V157.5" fill="none" stroke="#dcdcdc" stroke-width="1.6" stroke-linejoin="round" stroke-linecap="round" /><path d="M1695.6 150.7 L1699.3 154.3 L1703.0 150.7" fill="none" stroke="#f0f0f0" stroke-width="1.9" stroke-linecap="round" stroke-linejoin="round"/><rect x="1563.5" y="181" width="23" height="20.5" rx="0" fill="none" stroke="#d0d0d0" stroke-width="1.5"/><line x1="1563.5" y1="185" x2="1586.5" y2="185" stroke="#d0d0d0" stroke-width="1.3" stroke-linecap="butt"/><path d="M1575 188 V197 M1571 193.5 L1575 197.3 L1579 193.5" fill="none" stroke="#3b98e0" stroke-width="1.6" stroke-linejoin="round" stroke-linecap="round" /><path d="M1620.6 189.2 L1624.3 192.8 L1628.0 189.2" fill="none" stroke="#f0f0f0" stroke-width="1.9" stroke-linecap="round" stroke-linejoin="round"/><path d="M1575.5 219.5 L1585.5 229.5 L1574 241 L1564 231 Z" fill="none" stroke="#c770d6" stroke-width="1.6" stroke-linejoin="round" stroke-linecap="round" /><path d="M1569.5 225.5 L1579.5 235.5 L1574 241 L1564 231 Z" fill="#a63fb8" stroke="#c770d6" stroke-width="1.2" stroke-linejoin="round" stroke-linecap="round" /><path d="M1638.8 228.2 L1642.5 231.8 L1646.2 228.2" fill="none" stroke="#f0f0f0" stroke-width="1.9" stroke-linecap="round" stroke-linejoin="round"/><path d="M1749 152.5 H1771.5 L1763.5 163 V174 H1757 V163 Z" fill="none" stroke="#dcdcdc" stroke-width="1.6" stroke-linejoin="round" stroke-linecap="round" /><path d="M1768.3 222.7 L1772.0 226.3 L1775.7 222.7" fill="none" stroke="#f0f0f0" stroke-width="1.9" stroke-linecap="round" stroke-linejoin="round"/><circle cx="1826" cy="157" r="15" fill="none" stroke="#dcdcdc" stroke-width="1.6"/><line x1="1815" y1="168" x2="1799" y2="184" stroke="#dcdcdc" stroke-width="1.7" stroke-linecap="round"/><path d="M1842.6 222.7 L1846.3 226.3 L1850.0 222.7" fill="none" stroke="#f0f0f0" stroke-width="1.9" stroke-linecap="round" stroke-linejoin="round"/><rect x="1895.5" y="141" width="41" height="41" rx="0" fill="none" stroke="#c8502c" stroke-width="2.2"/><rect x="1900" y="145.5" width="13.5" height="13.5" rx="0" fill="none" stroke="#c8502c" stroke-width="1.7"/><rect x="1918.5" y="145.5" width="13.5" height="13.5" rx="0" fill="none" stroke="#c8502c" stroke-width="1.7"/><rect x="1900" y="164" width="13.5" height="13.5" rx="0" fill="none" stroke="#c8502c" stroke-width="1.7"/><rect x="1918.5" y="164" width="13.5" height="13.5" rx="0" fill="none" stroke="#c8502c" stroke-width="1.7"/><rect x="1989.5" y="142" width="41" height="40" rx="0" fill="none" stroke="#c8c8c8" stroke-width="1.6"/><rect x="1990" y="142.5" width="40" height="4.5" fill="#8c8c8c"/><line x1="1989.5" y1="156.5" x2="2030.5" y2="156.5" stroke="#9a9a9a" stroke-width="1.2" stroke-linecap="butt"/><line x1="1989.5" y1="166" x2="2030.5" y2="166" stroke="#9a9a9a" stroke-width="1.2" stroke-linecap="butt"/><line x1="1989.5" y1="175" x2="2030.5" y2="175" stroke="#9a9a9a" stroke-width="1.2" stroke-linecap="butt"/><line x1="2003" y1="147" x2="2003" y2="182" stroke="#9a9a9a" stroke-width="1.2" stroke-linecap="butt"/><line x1="2017" y1="147" x2="2017" y2="182" stroke="#9a9a9a" stroke-width="1.2" stroke-linecap="butt"/><circle cx="2008.5" cy="159" r="12.5" fill="#292929" stroke="#dcdcdc" stroke-width="1.6"/><rect x="2001.5" y="158" width="4" height="7" fill="#bdbdbd"/><rect x="2006.5" y="152" width="4" height="13" fill="#bdbdbd"/><rect x="2011.5" y="155" width="4" height="10" fill="#3b98e0"/><line x1="2017.5" y1="168.5" x2="2030.5" y2="182" stroke="#dcdcdc" stroke-width="2" stroke-linecap="butt"/><circle cx="2212.5" cy="198.8" r="56.3" fill="#ffffff"/><rect x="2181.8" y="173" width="61.2" height="52.8" fill="#5e66ee"/><rect x="2190" y="181.3" width="19" height="15.7" fill="#ffffff"/><rect x="2216" y="181.3" width="19" height="15.7" fill="#ffffff"/><rect x="2190" y="203" width="19" height="14.5" fill="#ffffff"/><rect x="2216" y="203" width="19" height="14.5" fill="#ffffff"/><rect x="2425.3" y="157" width="13.4" height="25.5" fill="#292929"/><rect x="2428.2" y="155" width="7.6" height="25.5" rx="3.8" fill="#fff"/><path d="M2850.5 254.2 L2857.0 260.8 L2863.5 254.2" fill="none" stroke="#f0f0f0" stroke-width="1.7" stroke-linecap="round" stroke-linejoin="round"/></svg>
<div class="t" style="top:41.00px;font-size:14.5px;color:#fff;left:-558.60px;width:1200px;text-align:center;font-weight:bold;">x</div>
<div style="left:47.3px;top:300px;width:2812.7px;height:1370px;background:#fff;"></div>
<div style="left:11px;top:278px;width:2849px;height:22px;background:#0a0a0a;"></div>
<svg style="left:26px;top:281px;" width="20" height="18" viewBox="0 0 20 18"><path d="M18.2 1.8 L18.2 15.9 L3.5 15.9 Z" fill="#6a6a6a"/></svg>
<div style="left:47.2px;top:278px;width:23.6px;height:22.3px;background:#5e5e5e;border-bottom:2.2px solid #1e8048;border-left:1px solid #8a8a8a;border-right:1px solid #8a8a8a;"></div>
<div class="t h" style="top:281.00px;font-size:18.4px;color:#fff;left:-540.50px;width:1200px;text-align:center;">A</div>
<div style="left:71px;top:279px;width:1px;height:21px;background:#444444;"></div>
<div class="t h" style="top:281.00px;font-size:18.4px;color:#e8e8e8;left:-500.00px;width:1200px;text-align:center;">B</div>
<div style="left:128px;top:279px;width:1px;height:21px;background:#444444;"></div>
<div class="t h" style="top:281.00px;font-size:18.4px;color:#e8e8e8;left:-442.50px;width:1200px;text-align:center;">C</div>
<div style="left:186px;top:279px;width:1px;height:21px;background:#444444;"></div>
<div class="t h" style="top:281.00px;font-size:18.4px;color:#e8e8e8;left:-384.50px;width:1200px;text-align:center;">D</div>
<div style="left:244px;top:279px;width:1px;height:21px;background:#444444;"></div>
<div class="t h" style="top:281.00px;font-size:18.4px;color:#e8e8e8;left:-326.50px;width:1200px;text-align:center;">E</div>
<div style="left:302px;top:279px;width:1px;height:21px;background:#444444;"></div>
<div class="t h" style="top:281.00px;font-size:18.4px;color:#e8e8e8;left:-268.50px;width:1200px;text-align:center;">F</div>
<div style="left:360px;top:279px;width:1px;height:21px;background:#444444;"></div>
<div class="t h" style="top:281.00px;font-size:18.4px;color:#e8e8e8;left:-205.50px;width:1200px;text-align:center;">G</div>
<div style="left:428px;top:279px;width:1px;height:21px;background:#444444;"></div>
<div class="t h" style="top:281.00px;font-size:18.4px;color:#e8e8e8;left:-142.50px;width:1200px;text-align:center;">H</div>
<div style="left:486px;top:279px;width:1px;height:21px;background:#444444;"></div>
<div class="t h" style="top:281.00px;font-size:18.4px;color:#e8e8e8;left:-84.50px;width:1200px;text-align:center;">I</div>
<div style="left:544px;top:279px;width:1px;height:21px;background:#444444;"></div>
<div class="t h" style="top:281.00px;font-size:18.4px;color:#e8e8e8;left:4.50px;width:1200px;text-align:center;">J</div>
<div style="left:664px;top:279px;width:1px;height:21px;background:#444444;"></div>
<div class="t h" style="top:281.00px;font-size:18.4px;color:#e8e8e8;left:124.50px;width:1200px;text-align:center;">K</div>
<div style="left:784px;top:279px;width:1px;height:21px;background:#444444;"></div>
<div class="t h" style="top:281.00px;font-size:18.4px;color:#e8e8e8;left:244.50px;width:1200px;text-align:center;">L</div>
<div style="left:904px;top:279px;width:1px;height:21px;background:#444444;"></div>
<div class="t h" style="top:281.00px;font-size:18.4px;color:#e8e8e8;left:364.50px;width:1200px;text-align:center;">M</div>
<div style="left:1024px;top:279px;width:1px;height:21px;background:#444444;"></div>
<div class="t h" style="top:281.00px;font-size:18.4px;color:#e8e8e8;left:484.50px;width:1200px;text-align:center;">N</div>
<div style="left:1144px;top:279px;width:1px;height:21px;background:#444444;"></div>
<div class="t h" style="top:281.00px;font-size:18.4px;color:#e8e8e8;left:560.00px;width:1200px;text-align:center;">O</div>
<div style="left:1175px;top:279px;width:1px;height:21px;background:#444444;"></div>
<div class="t h" style="top:281.00px;font-size:18.4px;color:#e8e8e8;left:644.00px;width:1200px;text-align:center;">P</div>
<div style="left:1312px;top:279px;width:1px;height:21px;background:#444444;"></div>
<div class="t h" style="top:281.00px;font-size:18.4px;color:#e8e8e8;left:781.00px;width:1200px;text-align:center;">Q</div>
<div style="left:1449px;top:279px;width:1px;height:21px;background:#444444;"></div>
<div class="t h" style="top:281.00px;font-size:18.4px;color:#e8e8e8;left:918.00px;width:1200px;text-align:center;">R</div>
<div style="left:1586px;top:279px;width:1px;height:21px;background:#444444;"></div>
<div class="t h" style="top:281.00px;font-size:18.4px;color:#e8e8e8;left:1055.00px;width:1200px;text-align:center;">S</div>
<div style="left:1723px;top:279px;width:1px;height:21px;background:#444444;"></div>
<div class="t h" style="top:281.00px;font-size:18.4px;color:#e8e8e8;left:1192.00px;width:1200px;text-align:center;">T</div>
<div style="left:1860px;top:279px;width:1px;height:21px;background:#444444;"></div>
<div class="t h" style="top:281.00px;font-size:18.4px;color:#e8e8e8;left:1329.00px;width:1200px;text-align:center;">U</div>
<div style="left:1997px;top:279px;width:1px;height:21px;background:#444444;"></div>
<div class="t h" style="top:281.00px;font-size:18.4px;color:#e8e8e8;left:1466.00px;width:1200px;text-align:center;">V</div>
<div style="left:2134px;top:279px;width:1px;height:21px;background:#444444;"></div>
<div class="t h" style="top:281.00px;font-size:18.4px;color:#e8e8e8;left:1603.00px;width:1200px;text-align:center;">W</div>
<div style="left:2271px;top:279px;width:1px;height:21px;background:#444444;"></div>
<div class="t h" style="top:281.00px;font-size:18.4px;color:#e8e8e8;left:1740.00px;width:1200px;text-align:center;">X</div>
<div style="left:2408px;top:279px;width:1px;height:21px;background:#444444;"></div>
<div class="t h" style="top:281.00px;font-size:18.4px;color:#e8e8e8;left:1877.00px;width:1200px;text-align:center;">Y</div>
<div style="left:2545px;top:279px;width:1px;height:21px;background:#444444;"></div>
<div class="t h" style="top:281.00px;font-size:18.4px;color:#e8e8e8;left:2014.00px;width:1200px;text-align:center;">Z</div>
<div style="left:2682px;top:279px;width:1px;height:21px;background:#444444;"></div>
<div class="t h" style="top:281.00px;font-size:18.4px;color:#e8e8e8;left:2151.00px;width:1200px;text-align:center;">AA</div>
<div style="left:2819px;top:279px;width:1px;height:21px;background:#444444;"></div>
<div class="t h" style="top:281.00px;font-size:18.4px;color:#e8e8e8;left:2820.00px;letter-spacing:-0.5px;">AB</div>
<div style="left:2842px;top:279px;width:1px;height:21px;background:#444444;"></div>
<div class="t h" style="left:2843px;top:281.00px;font-size:18.4px;color:#e8e8e8;width:17px;height:22px;overflow:hidden;">AC</div>
<div style="left:47.3px;top:299.6px;width:2812.7px;height:1px;background:#b0b0b0;"></div>
<div style="left:11px;top:300px;width:36.3px;height:1370px;background:#0a0a0a;"></div>
<div style="left:11px;top:300.4px;width:36.7px;height:37px;background:#6c6c6c;border-right:2px solid #1e8048;"></div>
<div style="left:11px;top:337px;width:35px;height:1px;background:#a8a8a8;"></div>
<div class="t h" style="left:11px;width:36px;text-align:center;top:318.00px;font-size:18.4px;letter-spacing:-0.3px;color:#e8e8e8;height:24.00px;overflow:hidden;">1</div>
<div style="left:11px;top:370px;width:36.3px;height:1px;background:#444444;"></div>
<div class="t h" style="left:11px;width:36px;text-align:center;top:351.00px;font-size:18.4px;letter-spacing:-0.3px;color:#e8e8e8;height:24.00px;overflow:hidden;">2</div>
<div style="left:11px;top:403px;width:36.3px;height:1px;background:#444444;"></div>
<div class="t h" style="left:11px;width:36px;text-align:center;top:384.00px;font-size:18.4px;letter-spacing:-0.3px;color:#e8e8e8;height:24.00px;overflow:hidden;">3</div>
<div style="left:11px;top:427px;width:36.3px;height:1px;background:#444444;"></div>
<div class="t h" style="left:11px;width:36px;text-align:center;top:408.00px;font-size:18.4px;letter-spacing:-0.3px;color:#e8e8e8;height:24.00px;overflow:hidden;">4</div>
<div style="left:11px;top:463px;width:36.3px;height:1px;background:#444444;"></div>
<div style="left:11px;top:466px;width:36.3px;height:1px;background:#444444;"></div>
<div class="t h" style="left:11px;width:36px;text-align:center;top:444.00px;font-size:18.4px;letter-spacing:-0.3px;color:#e8e8e8;height:24.00px;overflow:hidden;">5</div>
<div style="left:11px;top:490px;width:36.3px;height:1px;background:#444444;"></div>
<div class="t h" style="left:11px;width:36px;text-align:center;top:471.00px;font-size:18.4px;letter-spacing:-0.3px;color:#e8e8e8;height:24.00px;overflow:hidden;">7</div>
<div style="left:11px;top:513px;width:36.3px;height:1px;background:#444444;"></div>
<div class="t h" style="left:11px;width:36px;text-align:center;top:494.00px;font-size:18.4px;letter-spacing:-0.3px;color:#e8e8e8;height:24.00px;overflow:hidden;">8</div>
<div style="left:11px;top:536px;width:36.3px;height:1px;background:#444444;"></div>
<div class="t h" style="left:11px;width:36px;text-align:center;top:517.00px;font-size:18.4px;letter-spacing:-0.3px;color:#e8e8e8;height:24.00px;overflow:hidden;">9</div>
<div style="left:11px;top:559px;width:36.3px;height:1px;background:#444444;"></div>
<div class="t h" style="left:11px;width:36px;text-align:center;top:540.00px;font-size:18.4px;letter-spacing:-0.3px;color:#e8e8e8;height:24.00px;overflow:hidden;">10</div>
<div style="left:11px;top:582px;width:36.3px;height:1px;background:#444444;"></div>
<div class="t h" style="left:11px;width:36px;text-align:center;top:563.00px;font-size:18.4px;letter-spacing:-0.3px;color:#e8e8e8;height:24.00px;overflow:hidden;">11</div>
<div style="left:11px;top:608px;width:36.3px;height:1px;background:#444444;"></div>
<div class="t h" style="left:11px;width:36px;text-align:center;top:589.00px;font-size:18.4px;letter-spacing:-0.3px;color:#e8e8e8;height:24.00px;overflow:hidden;">12</div>
<div style="left:11px;top:631px;width:36.3px;height:1px;background:#444444;"></div>
<div class="t h" style="left:11px;width:36px;text-align:center;top:612.00px;font-size:18.4px;letter-spacing:-0.3px;color:#e8e8e8;height:24.00px;overflow:hidden;">13</div>
<div style="left:11px;top:654px;width:36.3px;height:1px;background:#444444;"></div>
<div class="t h" style="left:11px;width:36px;text-align:center;top:635.00px;font-size:18.4px;letter-spacing:-0.3px;color:#e8e8e8;height:24.00px;overflow:hidden;">14</div>
<div style="left:11px;top:677px;width:36.3px;height:1px;background:#444444;"></div>
<div class="t h" style="left:11px;width:36px;text-align:center;top:658.00px;font-size:18.4px;letter-spacing:-0.3px;color:#e8e8e8;height:24.00px;overflow:hidden;">15</div>
<div style="left:11px;top:704px;width:36.3px;height:1px;background:#444444;"></div>
<div class="t h" style="left:11px;width:36px;text-align:center;top:685.00px;font-size:18.4px;letter-spacing:-0.3px;color:#e8e8e8;height:24.00px;overflow:hidden;">16</div>
<div style="left:11px;top:726px;width:36.3px;height:1px;background:#444444;"></div>
<div class="t h" style="left:11px;width:36px;text-align:center;top:707.00px;font-size:18.4px;letter-spacing:-0.3px;color:#e8e8e8;height:24.00px;overflow:hidden;">17</div>
<div style="left:11px;top:749px;width:36.3px;height:1px;background:#444444;"></div>
<div class="t h" style="left:11px;width:36px;text-align:center;top:730.00px;font-size:18.4px;letter-spacing:-0.3px;color:#e8e8e8;height:24.00px;overflow:hidden;">18</div>
<div style="left:11px;top:772px;width:36.3px;height:1px;background:#444444;"></div>
<div style="left:11px;top:776px;width:36.3px;height:1px;background:#444444;"></div>
<div class="t h" style="left:11px;width:36px;text-align:center;top:753.00px;font-size:18.4px;letter-spacing:-0.3px;color:#e8e8e8;height:24.00px;overflow:hidden;">19</div>
<div style="left:11px;top:800px;width:36.3px;height:1px;background:#444444;"></div>
<div class="t h" style="left:11px;width:36px;text-align:center;top:781.00px;font-size:18.4px;letter-spacing:-0.3px;color:#e8e8e8;height:24.00px;overflow:hidden;">21</div>
<div style="left:11px;top:823px;width:36.3px;height:1px;background:#444444;"></div>
<div style="left:11px;top:827px;width:36.3px;height:1px;background:#444444;"></div>
<div class="t h" style="left:11px;width:36px;text-align:center;top:804.00px;font-size:18.4px;letter-spacing:-0.3px;color:#e8e8e8;height:24.00px;overflow:hidden;">22</div>
<div style="left:11px;top:854px;width:36.3px;height:1px;background:#444444;"></div>
<div class="t h" style="left:11px;width:36px;text-align:center;top:835.00px;font-size:18.4px;letter-spacing:-0.3px;color:#e8e8e8;height:24.00px;overflow:hidden;">24</div>
<div style="left:11px;top:877px;width:36.3px;height:1px;background:#444444;"></div>
<div class="t h" style="left:11px;width:36px;text-align:center;top:858.00px;font-size:18.4px;letter-spacing:-0.3px;color:#e8e8e8;height:24.00px;overflow:hidden;">25</div>
<div style="left:11px;top:900px;width:36.3px;height:1px;background:#444444;"></div>
<div class="t h" style="left:11px;width:36px;text-align:center;top:881.00px;font-size:18.4px;letter-spacing:-0.3px;color:#e8e8e8;height:24.00px;overflow:hidden;">26</div>
<div style="left:11px;top:923px;width:36.3px;height:1px;background:#444444;"></div>
<div class="t h" style="left:11px;width:36px;text-align:center;top:904.00px;font-size:18.4px;letter-spacing:-0.3px;color:#e8e8e8;height:24.00px;overflow:hidden;">27</div>
<div style="left:11px;top:946px;width:36.3px;height:1px;background:#444444;"></div>
<div class="t h" style="left:11px;width:36px;text-align:center;top:927.00px;font-size:18.4px;letter-spacing:-0.3px;color:#e8e8e8;height:24.00px;overflow:hidden;">28</div>
<div style="left:11px;top:969px;width:36.3px;height:1px;background:#444444;"></div>
<div class="t h" style="left:11px;width:36px;text-align:center;top:950.00px;font-size:18.4px;letter-spacing:-0.3px;color:#e8e8e8;height:24.00px;overflow:hidden;">29</div>
<div style="left:11px;top:992px;width:36.3px;height:1px;background:#444444;"></div>
<div class="t h" style="left:11px;width:36px;text-align:center;top:973.00px;font-size:18.4px;letter-spacing:-0.3px;color:#e8e8e8;height:24.00px;overflow:hidden;">30</div>
<div style="left:11px;top:1019px;width:36.3px;height:1px;background:#444444;"></div>
<div class="t h" style="left:11px;width:36px;text-align:center;top:1000.00px;font-size:18.4px;letter-spacing:-0.3px;color:#e8e8e8;height:24.00px;overflow:hidden;">31</div>
<div style="left:11px;top:1042px;width:36.3px;height:1px;background:#444444;"></div>
<div class="t h" style="left:11px;width:36px;text-align:center;top:1023.00px;font-size:18.4px;letter-spacing:-0.3px;color:#e8e8e8;height:24.00px;overflow:hidden;">32</div>
<div style="left:11px;top:1065px;width:36.3px;height:1px;background:#444444;"></div>
<div class="t h" style="left:11px;width:36px;text-align:center;top:1046.00px;font-size:18.4px;letter-spacing:-0.3px;color:#e8e8e8;height:24.00px;overflow:hidden;">33</div>
<div style="left:11px;top:1100px;width:36.3px;height:1px;background:#444444;"></div>
<div class="t h" style="left:11px;width:36px;text-align:center;top:1081.00px;font-size:18.4px;letter-spacing:-0.3px;color:#e8e8e8;height:24.00px;overflow:hidden;">34</div>
<div style="left:11px;top:1123px;width:36.3px;height:1px;background:#444444;"></div>
<div class="t h" style="left:11px;width:36px;text-align:center;top:1104.00px;font-size:18.4px;letter-spacing:-0.3px;color:#e8e8e8;height:24.00px;overflow:hidden;">35</div>
<div style="left:11px;top:1146px;width:36.3px;height:1px;background:#444444;"></div>
<div class="t h" style="left:11px;width:36px;text-align:center;top:1127.00px;font-size:18.4px;letter-spacing:-0.3px;color:#e8e8e8;height:24.00px;overflow:hidden;">36</div>
<div style="left:11px;top:1169px;width:36.3px;height:1px;background:#444444;"></div>
<div class="t h" style="left:11px;width:36px;text-align:center;top:1150.00px;font-size:18.4px;letter-spacing:-0.3px;color:#e8e8e8;height:24.00px;overflow:hidden;">37</div>
<div style="left:11px;top:1192px;width:36.3px;height:1px;background:#444444;"></div>
<div class="t h" style="left:11px;width:36px;text-align:center;top:1173.00px;font-size:18.4px;letter-spacing:-0.3px;color:#e8e8e8;height:24.00px;overflow:hidden;">38</div>
<div style="left:11px;top:1215px;width:36.3px;height:1px;background:#444444;"></div>
<div class="t h" style="left:11px;width:36px;text-align:center;top:1196.00px;font-size:18.4px;letter-spacing:-0.3px;color:#e8e8e8;height:24.00px;overflow:hidden;">39</div>
<div style="left:11px;top:1238px;width:36.3px;height:1px;background:#444444;"></div>
<div class="t h" style="left:11px;width:36px;text-align:center;top:1219.00px;font-size:18.4px;letter-spacing:-0.3px;color:#e8e8e8;height:24.00px;overflow:hidden;">40</div>
<div style="left:11px;top:1261px;width:36.3px;height:1px;background:#444444;"></div>
<div class="t h" style="left:11px;width:36px;text-align:center;top:1242.00px;font-size:18.4px;letter-spacing:-0.3px;color:#e8e8e8;height:24.00px;overflow:hidden;">41</div>
<div style="left:11px;top:1284px;width:36.3px;height:1px;background:#444444;"></div>
<div class="t h" style="left:11px;width:36px;text-align:center;top:1265.00px;font-size:18.4px;letter-spacing:-0.3px;color:#e8e8e8;height:24.00px;overflow:hidden;">42</div>
<div style="left:11px;top:1307px;width:36.3px;height:1px;background:#444444;"></div>
<div class="t h" style="left:11px;width:36px;text-align:center;top:1288.00px;font-size:18.4px;letter-spacing:-0.3px;color:#e8e8e8;height:24.00px;overflow:hidden;">43</div>
<div style="left:11px;top:1330px;width:36.3px;height:1px;background:#444444;"></div>
<div class="t h" style="left:11px;width:36px;text-align:center;top:1311.00px;font-size:18.4px;letter-spacing:-0.3px;color:#e8e8e8;height:24.00px;overflow:hidden;">44</div>
<div style="left:11px;top:1353px;width:36.3px;height:1px;background:#444444;"></div>
<div class="t h" style="left:11px;width:36px;text-align:center;top:1334.00px;font-size:18.4px;letter-spacing:-0.3px;color:#e8e8e8;height:24.00px;overflow:hidden;">45</div>
<div style="left:11px;top:1376px;width:36.3px;height:1px;background:#444444;"></div>
<div class="t h" style="left:11px;width:36px;text-align:center;top:1357.00px;font-size:18.4px;letter-spacing:-0.3px;color:#e8e8e8;height:24.00px;overflow:hidden;">46</div>
<div style="left:11px;top:1399px;width:36.3px;height:1px;background:#444444;"></div>
<div class="t h" style="left:11px;width:36px;text-align:center;top:1380.00px;font-size:18.4px;letter-spacing:-0.3px;color:#e8e8e8;height:24.00px;overflow:hidden;">47</div>
<div style="left:11px;top:1422px;width:36.3px;height:1px;background:#444444;"></div>
<div class="t h" style="left:11px;width:36px;text-align:center;top:1403.00px;font-size:18.4px;letter-spacing:-0.3px;color:#e8e8e8;height:24.00px;overflow:hidden;">48</div>
<div style="left:11px;top:1445px;width:36.3px;height:1px;background:#444444;"></div>
<div class="t h" style="left:11px;width:36px;text-align:center;top:1426.00px;font-size:18.4px;letter-spacing:-0.3px;color:#e8e8e8;height:24.00px;overflow:hidden;">49</div>
<div style="left:11px;top:1468px;width:36.3px;height:1px;background:#444444;"></div>
<div class="t h" style="left:11px;width:36px;text-align:center;top:1449.00px;font-size:18.4px;letter-spacing:-0.3px;color:#e8e8e8;height:24.00px;overflow:hidden;">50</div>
<div style="left:11px;top:1491px;width:36.3px;height:1px;background:#444444;"></div>
<div class="t h" style="left:11px;width:36px;text-align:center;top:1472.00px;font-size:18.4px;letter-spacing:-0.3px;color:#e8e8e8;height:24.00px;overflow:hidden;">51</div>
<div style="left:11px;top:1514px;width:36.3px;height:1px;background:#444444;"></div>
<div class="t h" style="left:11px;width:36px;text-align:center;top:1495.00px;font-size:18.4px;letter-spacing:-0.3px;color:#e8e8e8;height:24.00px;overflow:hidden;">52</div>
<div style="left:11px;top:1537px;width:36.3px;height:1px;background:#444444;"></div>
<div class="t h" style="left:11px;width:36px;text-align:center;top:1518.00px;font-size:18.4px;letter-spacing:-0.3px;color:#e8e8e8;height:24.00px;overflow:hidden;">53</div>
<div style="left:11px;top:1561px;width:36.3px;height:1px;background:#444444;"></div>
<div class="t h" style="left:11px;width:36px;text-align:center;top:1542.00px;font-size:18.4px;letter-spacing:-0.3px;color:#e8e8e8;height:24.00px;overflow:hidden;">54</div>
<div style="left:11px;top:1597px;width:36.3px;height:1px;background:#444444;"></div>
<div style="left:11px;top:1600px;width:36.3px;height:1px;background:#444444;"></div>
<div class="t h" style="left:11px;width:36px;text-align:center;top:1578.00px;font-size:18.4px;letter-spacing:-0.3px;color:#e8e8e8;height:24.00px;overflow:hidden;">55</div>
<div style="left:11px;top:1624px;width:36.3px;height:1px;background:#444444;"></div>
<div style="left:11px;top:1628px;width:36.3px;height:1px;background:#444444;"></div>
<div class="t h" style="left:11px;width:36px;text-align:center;top:1605.00px;font-size:18.4px;letter-spacing:-0.3px;color:#e8e8e8;height:24.00px;overflow:hidden;">57</div>
<div style="left:11px;top:1652px;width:36.3px;height:1px;background:#444444;"></div>
<div class="t h" style="left:11px;width:36px;text-align:center;top:1633.00px;font-size:18.4px;letter-spacing:-0.3px;color:#e8e8e8;height:24.00px;overflow:hidden;">59</div>
<div class="t h" style="left:11px;width:36px;text-align:center;top:1656.00px;font-size:18.4px;letter-spacing:-0.3px;color:#e8e8e8;height:14.00px;overflow:hidden;">60</div>
<div style="left:47.3px;top:426.5px;width:2812.7px;height:1px;background:#a0a0a0;"></div>
<div class="t h" style="top:305.00px;font-size:31.5px;color:#1f1f1f;left:76.00px;font-weight:bold;-webkit-text-stroke:0.38px;letter-spacing:-0.055px;">Financial Statements Summary</div>
<div class="t h" style="top:342.00px;font-size:27.2px;color:#000;left:75.50px;font-weight:bold;-webkit-text-stroke:0.33px;letter-spacing:0.69px;">ABC Company Inc.</div>
<div class="t h" style="top:378.00px;font-size:18.4px;color:#2f6fe6;left:73.50px;font-weight:bold;-webkit-text-stroke:0.22px;letter-spacing:-0.309px;text-decoration:underline;text-decoration-thickness:1.3px;text-underline-offset:1.8px;">Go to Table of Contents</div>
<div class="t h" style="top:378.00px;font-size:20.7px;color:#1f1f1f;left:1483.00px;font-weight:bold;-webkit-text-stroke:0.25px;letter-spacing:-0.161px;">Select reporting year</div>
<div style="left:1723px;top:370px;width:275px;height:34px;background:#fff066;border:1px solid #d9d2a0;"></div>
<div class="t h" style="top:378.00px;font-size:20.7px;color:#1a1a1a;left:1261.02px;width:1200px;text-align:center;font-weight:bold;-webkit-text-stroke:0.25px;letter-spacing:0.047px;">2026</div>
<div style="left:70px;top:427.7px;width:1074.5px;height:35.4px;background:#4b4fd1;"></div>
<div style="left:1175px;top:427.7px;width:1644.5px;height:35.4px;background:#4b4fd1;"></div>
<div class="t h" style="top:432.00px;font-size:27.6px;color:#fff;left:7.43px;width:1200px;text-align:center;font-weight:bold;-webkit-text-stroke:0.33px;letter-spacing:0.363px;">Income Statement ($'000) - 5 years to December 2030</div>
<div class="t h" style="top:432.00px;font-size:27.6px;color:#fff;left:1398.04px;width:1200px;text-align:center;font-weight:bold;-webkit-text-stroke:0.33px;letter-spacing:0.575px;">Income Statement ($'000) - 2026</div>
<div style="left:71px;top:468.2px;width:472.8px;height:21.6px;background:#6c73e8;"></div>
<div class="t h" style="top:471.00px;font-size:18.4px;color:#fff;left:81.50px;font-weight:bold;-webkit-text-stroke:0.22px;letter-spacing:-0.075px;">Year Ending</div>
<div style="left:545.2px;top:468.2px;width:118.8px;height:21.6px;background:#6c73e8;"></div>
<div class="t h" style="top:471.00px;font-size:18.4px;color:#fff;left:4.48px;width:1200px;text-align:center;font-weight:bold;-webkit-text-stroke:0.22px;letter-spacing:-0.641px;">2026</div>
<div style="left:665.2px;top:468.2px;width:118.8px;height:21.6px;background:#6c73e8;"></div>
<div class="t h" style="top:471.00px;font-size:18.4px;color:#fff;left:124.48px;width:1200px;text-align:center;font-weight:bold;-webkit-text-stroke:0.22px;letter-spacing:-0.641px;">2027</div>
<div style="left:785.2px;top:468.2px;width:118.8px;height:21.6px;background:#6c73e8;"></div>
<div class="t h" style="top:471.00px;font-size:18.4px;color:#fff;left:244.48px;width:1200px;text-align:center;font-weight:bold;-webkit-text-stroke:0.22px;letter-spacing:-0.641px;">2028</div>
<div style="left:905.2px;top:468.2px;width:118.8px;height:21.6px;background:#6c73e8;"></div>
<div class="t h" style="top:471.00px;font-size:18.4px;color:#fff;left:364.48px;width:1200px;text-align:center;font-weight:bold;-webkit-text-stroke:0.22px;letter-spacing:-0.641px;">2029</div>
<div style="left:1025.2px;top:468.2px;width:118.8px;height:21.6px;background:#6c73e8;"></div>
<div class="t h" style="top:471.00px;font-size:18.4px;color:#fff;left:484.48px;width:1200px;text-align:center;font-weight:bold;-webkit-text-stroke:0.22px;letter-spacing:-0.641px;">2030</div>
<div style="left:1176.0px;top:468.2px;width:135.8px;height:21.6px;background:#6c73e8;"></div>
<div class="t h" style="top:471.00px;font-size:18.4px;color:#fff;left:644.00px;width:1200px;text-align:center;font-weight:bold;-webkit-text-stroke:0.22px;">Jan</div>
<div style="left:1313.0px;top:468.2px;width:135.8px;height:21.6px;background:#6c73e8;"></div>
<div class="t h" style="top:471.00px;font-size:18.4px;color:#fff;left:781.00px;width:1200px;text-align:center;font-weight:bold;-webkit-text-stroke:0.22px;">Feb</div>
<div style="left:1450.0px;top:468.2px;width:135.8px;height:21.6px;background:#6c73e8;"></div>
<div class="t h" style="top:471.00px;font-size:18.4px;color:#fff;left:918.00px;width:1200px;text-align:center;font-weight:bold;-webkit-text-stroke:0.22px;">Mar</div>
<div style="left:1587.0px;top:468.2px;width:135.8px;height:21.6px;background:#6c73e8;"></div>
<div class="t h" style="top:471.00px;font-size:18.4px;color:#fff;left:1055.00px;width:1200px;text-align:center;font-weight:bold;-webkit-text-stroke:0.22px;">Apr</div>
<div style="left:1724.0px;top:468.2px;width:135.8px;height:21.6px;background:#6c73e8;"></div>
<div class="t h" style="top:471.00px;font-size:18.4px;color:#fff;left:1192.00px;width:1200px;text-align:center;font-weight:bold;-webkit-text-stroke:0.22px;">May</div>
<div style="left:1861.0px;top:468.2px;width:135.8px;height:21.6px;background:#6c73e8;"></div>
<div class="t h" style="top:471.00px;font-size:18.4px;color:#fff;left:1329.00px;width:1200px;text-align:center;font-weight:bold;-webkit-text-stroke:0.22px;">Jun</div>
<div style="left:1998.0px;top:468.2px;width:135.8px;height:21.6px;background:#6c73e8;"></div>
<div class="t h" style="top:471.00px;font-size:18.4px;color:#fff;left:1466.00px;width:1200px;text-align:center;font-weight:bold;-webkit-text-stroke:0.22px;">Jul</div>
<div style="left:2135.0px;top:468.2px;width:135.8px;height:21.6px;background:#6c73e8;"></div>
<div class="t h" style="top:471.00px;font-size:18.4px;color:#fff;left:1603.00px;width:1200px;text-align:center;font-weight:bold;-webkit-text-stroke:0.22px;">Aug</div>
<div style="left:2272.0px;top:468.2px;width:135.8px;height:21.6px;background:#6c73e8;"></div>
<div class="t h" style="top:471.00px;font-size:18.4px;color:#fff;left:1740.00px;width:1200px;text-align:center;font-weight:bold;-webkit-text-stroke:0.22px;">Sep</div>
<div style="left:2409.0px;top:468.2px;width:135.8px;height:21.6px;background:#6c73e8;"></div>
<div class="t h" style="top:471.00px;font-size:18.4px;color:#fff;left:1877.00px;width:1200px;text-align:center;font-weight:bold;-webkit-text-stroke:0.22px;">Oct</div>
<div style="left:2546.0px;top:468.2px;width:135.8px;height:21.6px;background:#6c73e8;"></div>
<div class="t h" style="top:471.00px;font-size:18.4px;color:#fff;left:2014.00px;width:1200px;text-align:center;font-weight:bold;-webkit-text-stroke:0.22px;">Nov</div>
<div style="left:2683.0px;top:468.2px;width:135.8px;height:21.6px;background:#6c73e8;"></div>
<div class="t h" style="top:471.00px;font-size:18.4px;color:#fff;left:2151.00px;width:1200px;text-align:center;font-weight:bold;-webkit-text-stroke:0.22px;">Dec</div>
<div class="t h" style="top:494.00px;font-size:18.4px;color:#000;left:73.50px;letter-spacing:-0.526px;">Revenue</div>
<div class="t h" style="top:494.00px;font-size:18.4px;color:#000;right:2248.28px;letter-spacing:-0.485px;">42</div>
<div class="t h" style="top:494.00px;font-size:18.4px;color:#000;right:2128.28px;letter-spacing:-0.48px;">147</div>
<div class="t h" style="top:494.00px;font-size:18.4px;color:#000;right:2008.28px;letter-spacing:-0.48px;">363</div>
<div class="t h" style="top:494.00px;font-size:18.4px;color:#000;right:1888.28px;letter-spacing:-0.48px;">800</div>
<div class="t h" style="top:494.00px;font-size:18.4px;color:#000;right:1768.12px;letter-spacing:-0.32px;">1,676</div>
<div class="t h" style="top:494.00px;font-size:18.4px;color:#000;right:1600.28px;letter-spacing:-0.485px;">1</div>
<div class="t h" style="top:494.00px;font-size:18.4px;color:#000;right:1463.28px;letter-spacing:-0.485px;">2</div>
<div class="t h" style="top:494.00px;font-size:18.4px;color:#000;right:1326.28px;letter-spacing:-0.485px;">3</div>
<div class="t h" style="top:494.00px;font-size:18.4px;color:#000;right:1189.28px;letter-spacing:-0.485px;">3</div>
<div class="t h" style="top:494.00px;font-size:18.4px;color:#000;right:1052.28px;letter-spacing:-0.485px;">3</div>
<div class="t h" style="top:494.00px;font-size:18.4px;color:#000;right:915.28px;letter-spacing:-0.485px;">4</div>
<div class="t h" style="top:494.00px;font-size:18.4px;color:#000;right:778.29px;letter-spacing:-0.485px;">4</div>
<div class="t h" style="top:494.00px;font-size:18.4px;color:#000;right:641.29px;letter-spacing:-0.485px;">4</div>
<div class="t h" style="top:494.00px;font-size:18.4px;color:#000;right:504.29px;letter-spacing:-0.485px;">5</div>
<div class="t h" style="top:494.00px;font-size:18.4px;color:#000;right:367.29px;letter-spacing:-0.485px;">5</div>
<div class="t h" style="top:494.00px;font-size:18.4px;color:#000;right:230.29px;letter-spacing:-0.485px;">5</div>
<div class="t h" style="top:494.00px;font-size:18.4px;color:#000;right:93.29px;letter-spacing:-0.485px;">5</div>
<div class="t h" style="top:517.00px;font-size:18.4px;color:#000;left:92.00px;font-style:italic;letter-spacing:0.033px;">Growth %</div>
<div class="t h" style="top:517.00px;font-size:18.4px;color:#000;right:2128.80px;font-style:italic;letter-spacing:0.205px;">249%</div>
<div class="t h" style="top:517.00px;font-size:18.4px;color:#000;right:2008.80px;font-style:italic;letter-spacing:0.205px;">147%</div>
<div class="t h" style="top:517.00px;font-size:18.4px;color:#000;right:1888.80px;font-style:italic;letter-spacing:0.205px;">120%</div>
<div class="t h" style="top:517.00px;font-size:18.4px;color:#000;right:1768.80px;font-style:italic;letter-spacing:0.205px;">110%</div>
<div class="t h" style="top:517.00px;font-size:18.4px;color:#000;right:1599.81px;font-style:italic;letter-spacing:0.695px;">-</div>
<div class="t h" style="top:517.00px;font-size:18.4px;color:#000;right:1463.80px;font-style:italic;letter-spacing:0.205px;">117%</div>
<div class="t h" style="top:517.00px;font-size:18.4px;color:#000;right:1326.57px;font-style:italic;letter-spacing:0.429px;">62%</div>
<div class="t h" style="top:517.00px;font-size:18.4px;color:#000;right:1189.57px;font-style:italic;letter-spacing:0.429px;">14%</div>
<div class="t h" style="top:517.00px;font-size:18.4px;color:#000;right:1052.57px;font-style:italic;letter-spacing:0.429px;">13%</div>
<div class="t h" style="top:517.00px;font-size:18.4px;color:#000;right:915.57px;font-style:italic;letter-spacing:0.429px;">11%</div>
<div class="t h" style="top:517.00px;font-size:18.4px;color:#000;right:778.57px;font-style:italic;letter-spacing:0.429px;">10%</div>
<div class="t h" style="top:517.00px;font-size:18.4px;color:#000;right:641.11px;font-style:italic;letter-spacing:0.887px;">9%</div>
<div class="t h" style="top:517.00px;font-size:18.4px;color:#000;right:504.11px;font-style:italic;letter-spacing:0.887px;">6%</div>
<div class="t h" style="top:517.00px;font-size:18.4px;color:#000;right:367.11px;font-style:italic;letter-spacing:0.887px;">3%</div>
<div class="t h" style="top:517.00px;font-size:18.4px;color:#000;right:229.80px;font-style:italic;letter-spacing:0.695px;">-</div>
<div class="t h" style="top:517.00px;font-size:18.4px;color:#000;right:92.80px;font-style:italic;letter-spacing:0.695px;">-</div>
<div class="t h" style="top:540.00px;font-size:18.4px;color:#000;left:73.50px;letter-spacing:-0.23px;">COGS</div>
<div class="t h" style="top:540.00px;font-size:18.4px;color:#000;right:2239.97px;letter-spacing:0.234px;">(6)</div>
<div class="t h" style="top:540.00px;font-size:18.4px;color:#000;right:2120.14px;letter-spacing:0.055px;">(21)</div>
<div class="t h" style="top:540.00px;font-size:18.4px;color:#000;right:2000.14px;letter-spacing:0.055px;">(50)</div>
<div class="t h" style="top:540.00px;font-size:18.4px;color:#000;right:1880.25px;letter-spacing:-0.053px;">(106)</div>
<div class="t h" style="top:540.00px;font-size:18.4px;color:#000;right:1760.25px;letter-spacing:-0.053px;">(211)</div>
<div class="t h" style="top:540.00px;font-size:18.4px;color:#000;right:1591.97px;letter-spacing:0.234px;">(0)</div>
<div class="t h" style="top:540.00px;font-size:18.4px;color:#000;right:1454.97px;letter-spacing:0.234px;">(0)</div>
<div class="t h" style="top:540.00px;font-size:18.4px;color:#000;right:1317.97px;letter-spacing:0.234px;">(0)</div>
<div class="t h" style="top:540.00px;font-size:18.4px;color:#000;right:1180.97px;letter-spacing:0.234px;">(0)</div>
<div class="t h" style="top:540.00px;font-size:18.4px;color:#000;right:1043.97px;letter-spacing:0.234px;">(0)</div>
<div class="t h" style="top:540.00px;font-size:18.4px;color:#000;right:906.97px;letter-spacing:0.234px;">(1)</div>
<div class="t h" style="top:540.00px;font-size:18.4px;color:#000;right:769.97px;letter-spacing:0.234px;">(1)</div>
<div class="t h" style="top:540.00px;font-size:18.4px;color:#000;right:632.97px;letter-spacing:0.234px;">(1)</div>
<div class="t h" style="top:540.00px;font-size:18.4px;color:#000;right:495.97px;letter-spacing:0.234px;">(1)</div>
<div class="t h" style="top:540.00px;font-size:18.4px;color:#000;right:358.97px;letter-spacing:0.234px;">(1)</div>
<div class="t h" style="top:540.00px;font-size:18.4px;color:#000;right:221.97px;letter-spacing:0.234px;">(1)</div>
<div class="t h" style="top:540.00px;font-size:18.4px;color:#000;right:84.97px;letter-spacing:0.234px;">(1)</div>
<div class="t h" style="top:563.00px;font-size:18.4px;color:#000;left:92.00px;font-style:italic;letter-spacing:-0.04px;">% of Revenue</div>
<div class="t h" style="top:563.00px;font-size:18.4px;color:#000;right:2240.70px;font-style:italic;letter-spacing:0.495px;">(15%)</div>
<div class="t h" style="top:563.00px;font-size:18.4px;color:#000;right:2120.70px;font-style:italic;letter-spacing:0.495px;">(14%)</div>
<div class="t h" style="top:563.00px;font-size:18.4px;color:#000;right:2000.70px;font-style:italic;letter-spacing:0.495px;">(14%)</div>
<div class="t h" style="top:563.00px;font-size:18.4px;color:#000;right:1880.70px;font-style:italic;letter-spacing:0.495px;">(13%)</div>
<div class="t h" style="top:563.00px;font-size:18.4px;color:#000;right:1760.71px;font-style:italic;letter-spacing:0.495px;">(13%)</div>
<div class="t h" style="top:563.00px;font-size:18.4px;color:#000;right:1592.71px;font-style:italic;letter-spacing:0.495px;">(15%)</div>
<div class="t h" style="top:563.00px;font-size:18.4px;color:#000;right:1455.71px;font-style:italic;letter-spacing:0.495px;">(15%)</div>
<div class="t h" style="top:563.00px;font-size:18.4px;color:#000;right:1318.71px;font-style:italic;letter-spacing:0.495px;">(15%)</div>
<div class="t h" style="top:563.00px;font-size:18.4px;color:#000;right:1181.71px;font-style:italic;letter-spacing:0.495px;">(15%)</div>
<div class="t h" style="top:563.00px;font-size:18.4px;color:#000;right:1044.71px;font-style:italic;letter-spacing:0.495px;">(15%)</div>
<div class="t h" style="top:563.00px;font-size:18.4px;color:#000;right:907.71px;font-style:italic;letter-spacing:0.495px;">(15%)</div>
<div class="t h" style="top:563.00px;font-size:18.4px;color:#000;right:770.70px;font-style:italic;letter-spacing:0.495px;">(15%)</div>
<div class="t h" style="top:563.00px;font-size:18.4px;color:#000;right:633.70px;font-style:italic;letter-spacing:0.495px;">(15%)</div>
<div class="t h" style="top:563.00px;font-size:18.4px;color:#000;right:496.70px;font-style:italic;letter-spacing:0.495px;">(15%)</div>
<div class="t h" style="top:563.00px;font-size:18.4px;color:#000;right:359.70px;font-style:italic;letter-spacing:0.495px;">(15%)</div>
<div class="t h" style="top:563.00px;font-size:18.4px;color:#000;right:222.70px;font-style:italic;letter-spacing:0.495px;">(15%)</div>
<div class="t h" style="top:563.00px;font-size:18.4px;color:#000;right:85.70px;font-style:italic;letter-spacing:0.495px;">(15%)</div>
<div style="left:70px;top:582px;width:1074.5px;height:26.7px;background:#4bb1e8;"></div>
<div style="left:1175px;top:582px;width:1644.5px;height:26.7px;background:#4bb1e8;"></div>
<div class="t h" style="top:587.00px;font-size:20.7px;color:#fff;left:85.00px;font-weight:bold;-webkit-text-stroke:0.25px;letter-spacing:0.016px;">Gross Margin</div>
<div class="t h" style="top:587.50px;font-size:18.4px;color:#fff;right:2247.82px;font-weight:bold;-webkit-text-stroke:0.22px;letter-spacing:-0.016px;">36</div>
<div class="t h" style="top:587.50px;font-size:18.4px;color:#fff;right:2127.82px;font-weight:bold;-webkit-text-stroke:0.22px;letter-spacing:-0.016px;">126</div>
<div class="t h" style="top:587.50px;font-size:18.4px;color:#fff;right:2007.82px;font-weight:bold;-webkit-text-stroke:0.22px;letter-spacing:-0.016px;">313</div>
<div class="t h" style="top:587.50px;font-size:18.4px;color:#fff;right:1887.82px;font-weight:bold;-webkit-text-stroke:0.22px;letter-spacing:-0.016px;">694</div>
<div class="t h" style="top:587.50px;font-size:18.4px;color:#fff;right:1767.92px;font-weight:bold;-webkit-text-stroke:0.22px;letter-spacing:-0.117px;">1,465</div>
<div class="t h" style="top:587.50px;font-size:18.4px;color:#fff;right:1599.82px;font-weight:bold;-webkit-text-stroke:0.22px;letter-spacing:-0.016px;">1</div>
<div class="t h" style="top:587.50px;font-size:18.4px;color:#fff;right:1462.82px;font-weight:bold;-webkit-text-stroke:0.22px;letter-spacing:-0.016px;">1</div>
<div class="t h" style="top:587.50px;font-size:18.4px;color:#fff;right:1325.82px;font-weight:bold;-webkit-text-stroke:0.22px;letter-spacing:-0.016px;">2</div>
<div class="t h" style="top:587.50px;font-size:18.4px;color:#fff;right:1188.82px;font-weight:bold;-webkit-text-stroke:0.22px;letter-spacing:-0.016px;">2</div>
<div class="t h" style="top:587.50px;font-size:18.4px;color:#fff;right:1051.82px;font-weight:bold;-webkit-text-stroke:0.22px;letter-spacing:-0.016px;">3</div>
<div class="t h" style="top:587.50px;font-size:18.4px;color:#fff;right:914.82px;font-weight:bold;-webkit-text-stroke:0.22px;letter-spacing:-0.016px;">3</div>
<div class="t h" style="top:587.50px;font-size:18.4px;color:#fff;right:777.82px;font-weight:bold;-webkit-text-stroke:0.22px;letter-spacing:-0.016px;">3</div>
<div class="t h" style="top:587.50px;font-size:18.4px;color:#fff;right:640.82px;font-weight:bold;-webkit-text-stroke:0.22px;letter-spacing:-0.016px;">4</div>
<div class="t h" style="top:587.50px;font-size:18.4px;color:#fff;right:503.82px;font-weight:bold;-webkit-text-stroke:0.22px;letter-spacing:-0.016px;">4</div>
<div class="t h" style="top:587.50px;font-size:18.4px;color:#fff;right:366.82px;font-weight:bold;-webkit-text-stroke:0.22px;letter-spacing:-0.016px;">4</div>
<div class="t h" style="top:587.50px;font-size:18.4px;color:#fff;right:229.82px;font-weight:bold;-webkit-text-stroke:0.22px;letter-spacing:-0.016px;">4</div>
<div class="t h" style="top:587.50px;font-size:18.4px;color:#fff;right:92.82px;font-weight:bold;-webkit-text-stroke:0.22px;letter-spacing:-0.016px;">4</div>
<div class="t h" style="top:612.00px;font-size:18.4px;color:#000;left:92.00px;font-style:italic;letter-spacing:-0.159px;">Gross Margin %</div>
<div class="t h" style="top:612.00px;font-size:18.4px;color:#000;right:2248.57px;font-style:italic;letter-spacing:0.429px;">85%</div>
<div class="t h" style="top:612.00px;font-size:18.4px;color:#000;right:2128.57px;font-style:italic;letter-spacing:0.429px;">86%</div>
<div class="t h" style="top:612.00px;font-size:18.4px;color:#000;right:2008.57px;font-style:italic;letter-spacing:0.429px;">86%</div>
<div class="t h" style="top:612.00px;font-size:18.4px;color:#000;right:1888.57px;font-style:italic;letter-spacing:0.429px;">87%</div>
<div class="t h" style="top:612.00px;font-size:18.4px;color:#000;right:1768.57px;font-style:italic;letter-spacing:0.429px;">87%</div>
<div class="t h" style="top:612.00px;font-size:18.4px;color:#000;right:1600.57px;font-style:italic;letter-spacing:0.429px;">85%</div>
<div class="t h" style="top:612.00px;font-size:18.4px;color:#000;right:1463.57px;font-style:italic;letter-spacing:0.429px;">85%</div>
<div class="t h" style="top:612.00px;font-size:18.4px;color:#000;right:1326.57px;font-style:italic;letter-spacing:0.429px;">85%</div>
<div class="t h" style="top:612.00px;font-size:18.4px;color:#000;right:1189.57px;font-style:italic;letter-spacing:0.429px;">85%</div>
<div class="t h" style="top:612.00px;font-size:18.4px;color:#000;right:1052.57px;font-style:italic;letter-spacing:0.429px;">85%</div>
<div class="t h" style="top:612.00px;font-size:18.4px;color:#000;right:915.57px;font-style:italic;letter-spacing:0.429px;">85%</div>
<div class="t h" style="top:612.00px;font-size:18.4px;color:#000;right:778.57px;font-style:italic;letter-spacing:0.429px;">85%</div>
<div class="t h" style="top:612.00px;font-size:18.4px;color:#000;right:641.57px;font-style:italic;letter-spacing:0.429px;">85%</div>
<div class="t h" style="top:612.00px;font-size:18.4px;color:#000;right:504.57px;font-style:italic;letter-spacing:0.429px;">85%</div>
<div class="t h" style="top:612.00px;font-size:18.4px;color:#000;right:367.57px;font-style:italic;letter-spacing:0.429px;">85%</div>
<div class="t h" style="top:612.00px;font-size:18.4px;color:#000;right:230.57px;font-style:italic;letter-spacing:0.429px;">85%</div>
<div class="t h" style="top:612.00px;font-size:18.4px;color:#000;right:93.57px;font-style:italic;letter-spacing:0.429px;">85%</div>
<div class="t h" style="top:635.00px;font-size:18.4px;color:#000;left:73.50px;letter-spacing:-0.527px;">Variable Expenses</div>
<div class="t h" style="top:635.00px;font-size:18.4px;color:#000;right:2239.97px;letter-spacing:0.234px;">(2)</div>
<div class="t h" style="top:635.00px;font-size:18.4px;color:#000;right:2119.97px;letter-spacing:0.234px;">(6)</div>
<div class="t h" style="top:635.00px;font-size:18.4px;color:#000;right:2000.14px;letter-spacing:0.055px;">(16)</div>
<div class="t h" style="top:635.00px;font-size:18.4px;color:#000;right:1880.14px;letter-spacing:0.055px;">(34)</div>
<div class="t h" style="top:635.00px;font-size:18.4px;color:#000;right:1760.14px;letter-spacing:0.055px;">(69)</div>
<div class="t h" style="top:635.00px;font-size:18.4px;color:#000;right:1591.97px;letter-spacing:0.234px;">(0)</div>
<div class="t h" style="top:635.00px;font-size:18.4px;color:#000;right:1454.97px;letter-spacing:0.234px;">(0)</div>
<div class="t h" style="top:635.00px;font-size:18.4px;color:#000;right:1317.97px;letter-spacing:0.234px;">(0)</div>
<div class="t h" style="top:635.00px;font-size:18.4px;color:#000;right:1180.97px;letter-spacing:0.234px;">(0)</div>
<div class="t h" style="top:635.00px;font-size:18.4px;color:#000;right:1043.97px;letter-spacing:0.234px;">(0)</div>
<div class="t h" style="top:635.00px;font-size:18.4px;color:#000;right:906.97px;letter-spacing:0.234px;">(0)</div>
<div class="t h" style="top:635.00px;font-size:18.4px;color:#000;right:769.97px;letter-spacing:0.234px;">(0)</div>
<div class="t h" style="top:635.00px;font-size:18.4px;color:#000;right:632.97px;letter-spacing:0.234px;">(0)</div>
<div class="t h" style="top:635.00px;font-size:18.4px;color:#000;right:495.97px;letter-spacing:0.234px;">(0)</div>
<div class="t h" style="top:635.00px;font-size:18.4px;color:#000;right:358.97px;letter-spacing:0.234px;">(0)</div>
<div class="t h" style="top:635.00px;font-size:18.4px;color:#000;right:221.97px;letter-spacing:0.234px;">(0)</div>
<div class="t h" style="top:635.00px;font-size:18.4px;color:#000;right:84.97px;letter-spacing:0.234px;">(0)</div>
<div class="t h" style="top:658.00px;font-size:18.4px;color:#000;left:92.00px;font-style:italic;letter-spacing:-0.04px;">% of Revenue</div>
<div class="t h" style="top:658.00px;font-size:18.4px;color:#000;right:2240.46px;font-style:italic;letter-spacing:0.736px;">(5%)</div>
<div class="t h" style="top:658.00px;font-size:18.4px;color:#000;right:2120.46px;font-style:italic;letter-spacing:0.736px;">(4%)</div>
<div class="t h" style="top:658.00px;font-size:18.4px;color:#000;right:2000.46px;font-style:italic;letter-spacing:0.736px;">(4%)</div>
<div class="t h" style="top:658.00px;font-size:18.4px;color:#000;right:1880.46px;font-style:italic;letter-spacing:0.736px;">(4%)</div>
<div class="t h" style="top:658.00px;font-size:18.4px;color:#000;right:1760.46px;font-style:italic;letter-spacing:0.736px;">(4%)</div>
<div class="t h" style="top:658.00px;font-size:18.4px;color:#000;right:1592.46px;font-style:italic;letter-spacing:0.736px;">(5%)</div>
<div class="t h" style="top:658.00px;font-size:18.4px;color:#000;right:1455.46px;font-style:italic;letter-spacing:0.736px;">(5%)</div>
<div class="t h" style="top:658.00px;font-size:18.4px;color:#000;right:1318.46px;font-style:italic;letter-spacing:0.736px;">(5%)</div>
<div class="t h" style="top:658.00px;font-size:18.4px;color:#000;right:1181.46px;font-style:italic;letter-spacing:0.736px;">(5%)</div>
<div class="t h" style="top:658.00px;font-size:18.4px;color:#000;right:1044.46px;font-style:italic;letter-spacing:0.736px;">(5%)</div>
<div class="t h" style="top:658.00px;font-size:18.4px;color:#000;right:907.46px;font-style:italic;letter-spacing:0.736px;">(5%)</div>
<div class="t h" style="top:658.00px;font-size:18.4px;color:#000;right:770.46px;font-style:italic;letter-spacing:0.736px;">(5%)</div>
<div class="t h" style="top:658.00px;font-size:18.4px;color:#000;right:633.46px;font-style:italic;letter-spacing:0.736px;">(5%)</div>
<div class="t h" style="top:658.00px;font-size:18.4px;color:#000;right:496.46px;font-style:italic;letter-spacing:0.736px;">(5%)</div>
<div class="t h" style="top:658.00px;font-size:18.4px;color:#000;right:359.46px;font-style:italic;letter-spacing:0.736px;">(5%)</div>
<div class="t h" style="top:658.00px;font-size:18.4px;color:#000;right:222.46px;font-style:italic;letter-spacing:0.736px;">(5%)</div>
<div class="t h" style="top:658.00px;font-size:18.4px;color:#000;right:85.46px;font-style:italic;letter-spacing:0.736px;">(5%)</div>
<div style="left:70px;top:677px;width:1074.5px;height:26.7px;background:#4bb1e8;"></div>
<div style="left:1175px;top:677px;width:1644.5px;height:26.7px;background:#4bb1e8;"></div>
<div class="t h" style="top:682.00px;font-size:20.7px;color:#fff;left:85.00px;font-weight:bold;-webkit-text-stroke:0.25px;letter-spacing:-0.065px;">Contribution Margin</div>
<div class="t h" style="top:682.50px;font-size:18.4px;color:#fff;right:2247.82px;font-weight:bold;-webkit-text-stroke:0.22px;letter-spacing:-0.016px;">34</div>
<div class="t h" style="top:682.50px;font-size:18.4px;color:#fff;right:2127.82px;font-weight:bold;-webkit-text-stroke:0.22px;letter-spacing:-0.016px;">119</div>
<div class="t h" style="top:682.50px;font-size:18.4px;color:#fff;right:2007.82px;font-weight:bold;-webkit-text-stroke:0.22px;letter-spacing:-0.016px;">297</div>
<div class="t h" style="top:682.50px;font-size:18.4px;color:#fff;right:1887.82px;font-weight:bold;-webkit-text-stroke:0.22px;letter-spacing:-0.016px;">661</div>
<div class="t h" style="top:682.50px;font-size:18.4px;color:#fff;right:1767.92px;font-weight:bold;-webkit-text-stroke:0.22px;letter-spacing:-0.117px;">1,396</div>
<div class="t h" style="top:682.50px;font-size:18.4px;color:#fff;right:1599.82px;font-weight:bold;-webkit-text-stroke:0.22px;letter-spacing:-0.016px;">1</div>
<div class="t h" style="top:682.50px;font-size:18.4px;color:#fff;right:1462.82px;font-weight:bold;-webkit-text-stroke:0.22px;letter-spacing:-0.016px;">1</div>
<div class="t h" style="top:682.50px;font-size:18.4px;color:#fff;right:1325.82px;font-weight:bold;-webkit-text-stroke:0.22px;letter-spacing:-0.016px;">2</div>
<div class="t h" style="top:682.50px;font-size:18.4px;color:#fff;right:1188.82px;font-weight:bold;-webkit-text-stroke:0.22px;letter-spacing:-0.016px;">2</div>
<div class="t h" style="top:682.50px;font-size:18.4px;color:#fff;right:1051.82px;font-weight:bold;-webkit-text-stroke:0.22px;letter-spacing:-0.016px;">3</div>
<div class="t h" style="top:682.50px;font-size:18.4px;color:#fff;right:914.82px;font-weight:bold;-webkit-text-stroke:0.22px;letter-spacing:-0.016px;">3</div>
<div class="t h" style="top:682.50px;font-size:18.4px;color:#fff;right:777.82px;font-weight:bold;-webkit-text-stroke:0.22px;letter-spacing:-0.016px;">3</div>
<div class="t h" style="top:682.50px;font-size:18.4px;color:#fff;right:640.82px;font-weight:bold;-webkit-text-stroke:0.22px;letter-spacing:-0.016px;">4</div>
<div class="t h" style="top:682.50px;font-size:18.4px;color:#fff;right:503.82px;font-weight:bold;-webkit-text-stroke:0.22px;letter-spacing:-0.016px;">4</div>
<div class="t h" style="top:682.50px;font-size:18.4px;color:#fff;right:366.82px;font-weight:bold;-webkit-text-stroke:0.22px;letter-spacing:-0.016px;">4</div>
<div class="t h" style="top:682.50px;font-size:18.4px;color:#fff;right:229.82px;font-weight:bold;-webkit-text-stroke:0.22px;letter-spacing:-0.016px;">4</div>
<div class="t h" style="top:682.50px;font-size:18.4px;color:#fff;right:92.82px;font-weight:bold;-webkit-text-stroke:0.22px;letter-spacing:-0.016px;">4</div>
<div class="t h" style="top:707.00px;font-size:18.4px;color:#000;left:92.00px;font-style:italic;letter-spacing:-0.236px;">Contribution Margin %</div>
<div class="t h" style="top:707.00px;font-size:18.4px;color:#000;right:2248.57px;font-style:italic;letter-spacing:0.429px;">81%</div>
<div class="t h" style="top:707.00px;font-size:18.4px;color:#000;right:2128.57px;font-style:italic;letter-spacing:0.429px;">81%</div>
<div class="t h" style="top:707.00px;font-size:18.4px;color:#000;right:2008.57px;font-style:italic;letter-spacing:0.429px;">82%</div>
<div class="t h" style="top:707.00px;font-size:18.4px;color:#000;right:1888.57px;font-style:italic;letter-spacing:0.429px;">83%</div>
<div class="t h" style="top:707.00px;font-size:18.4px;color:#000;right:1768.57px;font-style:italic;letter-spacing:0.429px;">83%</div>
<div class="t h" style="top:707.00px;font-size:18.4px;color:#000;right:1600.57px;font-style:italic;letter-spacing:0.429px;">81%</div>
<div class="t h" style="top:707.00px;font-size:18.4px;color:#000;right:1463.57px;font-style:italic;letter-spacing:0.429px;">81%</div>
<div class="t h" style="top:707.00px;font-size:18.4px;color:#000;right:1326.57px;font-style:italic;letter-spacing:0.429px;">81%</div>
<div class="t h" style="top:707.00px;font-size:18.4px;color:#000;right:1189.57px;font-style:italic;letter-spacing:0.429px;">81%</div>
<div class="t h" style="top:707.00px;font-size:18.4px;color:#000;right:1052.57px;font-style:italic;letter-spacing:0.429px;">81%</div>
<div class="t h" style="top:707.00px;font-size:18.4px;color:#000;right:915.57px;font-style:italic;letter-spacing:0.429px;">81%</div>
<div class="t h" style="top:707.00px;font-size:18.4px;color:#000;right:778.57px;font-style:italic;letter-spacing:0.429px;">81%</div>
<div class="t h" style="top:707.00px;font-size:18.4px;color:#000;right:641.57px;font-style:italic;letter-spacing:0.429px;">81%</div>
<div class="t h" style="top:707.00px;font-size:18.4px;color:#000;right:504.57px;font-style:italic;letter-spacing:0.429px;">81%</div>
<div class="t h" style="top:707.00px;font-size:18.4px;color:#000;right:367.57px;font-style:italic;letter-spacing:0.429px;">81%</div>
<div class="t h" style="top:707.00px;font-size:18.4px;color:#000;right:230.57px;font-style:italic;letter-spacing:0.429px;">81%</div>
<div class="t h" style="top:707.00px;font-size:18.4px;color:#000;right:93.57px;font-style:italic;letter-spacing:0.429px;">81%</div>
<div class="t h" style="top:730.00px;font-size:18.4px;color:#000;left:73.50px;letter-spacing:-0.399px;">Payroll Expenses</div>
<div class="t h" style="top:730.00px;font-size:18.4px;color:#000;right:2240.25px;letter-spacing:-0.053px;">(139)</div>
<div class="t h" style="top:730.00px;font-size:18.4px;color:#000;right:2120.25px;letter-spacing:-0.053px;">(217)</div>
<div class="t h" style="top:730.00px;font-size:18.4px;color:#000;right:2000.25px;letter-spacing:-0.053px;">(267)</div>
<div class="t h" style="top:730.00px;font-size:18.4px;color:#000;right:1880.25px;letter-spacing:-0.053px;">(316)</div>
<div class="t h" style="top:730.00px;font-size:18.4px;color:#000;right:1760.25px;letter-spacing:-0.053px;">(325)</div>
<div class="t h" style="top:730.00px;font-size:18.4px;color:#000;right:1592.14px;letter-spacing:0.055px;">(12)</div>
<div class="t h" style="top:730.00px;font-size:18.4px;color:#000;right:1455.14px;letter-spacing:0.055px;">(12)</div>
<div class="t h" style="top:730.00px;font-size:18.4px;color:#000;right:1318.14px;letter-spacing:0.055px;">(12)</div>
<div class="t h" style="top:730.00px;font-size:18.4px;color:#000;right:1181.14px;letter-spacing:0.055px;">(12)</div>
<div class="t h" style="top:730.00px;font-size:18.4px;color:#000;right:1044.14px;letter-spacing:0.055px;">(12)</div>
<div class="t h" style="top:730.00px;font-size:18.4px;color:#000;right:907.14px;letter-spacing:0.055px;">(12)</div>
<div class="t h" style="top:730.00px;font-size:18.4px;color:#000;right:770.14px;letter-spacing:0.055px;">(12)</div>
<div class="t h" style="top:730.00px;font-size:18.4px;color:#000;right:633.14px;letter-spacing:0.055px;">(12)</div>
<div class="t h" style="top:730.00px;font-size:18.4px;color:#000;right:496.14px;letter-spacing:0.055px;">(12)</div>
<div class="t h" style="top:730.00px;font-size:18.4px;color:#000;right:359.14px;letter-spacing:0.055px;">(12)</div>
<div class="t h" style="top:730.00px;font-size:18.4px;color:#000;right:222.14px;letter-spacing:0.055px;">(12)</div>
<div class="t h" style="top:730.00px;font-size:18.4px;color:#000;right:85.14px;letter-spacing:0.055px;">(12)</div>
<div class="t h" style="top:753.00px;font-size:18.4px;color:#000;left:92.00px;font-style:italic;letter-spacing:-0.04px;">% of Revenue</div>
<div class="t h" style="top:753.00px;font-size:18.4px;color:#000;right:2240.87px;font-style:italic;letter-spacing:0.332px;">(330%)</div>
<div class="t h" style="top:753.00px;font-size:18.4px;color:#000;right:2120.87px;font-style:italic;letter-spacing:0.332px;">(148%)</div>
<div class="t h" style="top:753.00px;font-size:18.4px;color:#000;right:2000.70px;font-style:italic;letter-spacing:0.495px;">(73%)</div>
<div class="t h" style="top:753.00px;font-size:18.4px;color:#000;right:1880.70px;font-style:italic;letter-spacing:0.495px;">(39%)</div>
<div class="t h" style="top:753.00px;font-size:18.4px;color:#000;right:1760.71px;font-style:italic;letter-spacing:0.495px;">(19%)</div>
<div class="t h" style="top:753.00px;font-size:18.4px;color:#000;right:1592.97px;font-style:italic;letter-spacing:0.229px;">(1,580%)</div>
<div class="t h" style="top:753.00px;font-size:18.4px;color:#000;right:1455.87px;font-style:italic;letter-spacing:0.332px;">(729%)</div>
<div class="t h" style="top:753.00px;font-size:18.4px;color:#000;right:1318.87px;font-style:italic;letter-spacing:0.332px;">(451%)</div>
<div class="t h" style="top:753.00px;font-size:18.4px;color:#000;right:1181.87px;font-style:italic;letter-spacing:0.332px;">(395%)</div>
<div class="t h" style="top:753.00px;font-size:18.4px;color:#000;right:1044.87px;font-style:italic;letter-spacing:0.332px;">(351%)</div>
<div class="t h" style="top:753.00px;font-size:18.4px;color:#000;right:907.87px;font-style:italic;letter-spacing:0.332px;">(316%)</div>
<div class="t h" style="top:753.00px;font-size:18.4px;color:#000;right:770.87px;font-style:italic;letter-spacing:0.332px;">(287%)</div>
<div class="t h" style="top:753.00px;font-size:18.4px;color:#000;right:633.87px;font-style:italic;letter-spacing:0.332px;">(263%)</div>
<div class="t h" style="top:753.00px;font-size:18.4px;color:#000;right:496.87px;font-style:italic;letter-spacing:0.332px;">(249%)</div>
<div class="t h" style="top:753.00px;font-size:18.4px;color:#000;right:359.87px;font-style:italic;letter-spacing:0.332px;">(243%)</div>
<div class="t h" style="top:753.00px;font-size:18.4px;color:#000;right:222.87px;font-style:italic;letter-spacing:0.332px;">(243%)</div>
<div class="t h" style="top:753.00px;font-size:18.4px;color:#000;right:85.87px;font-style:italic;letter-spacing:0.332px;">(243%)</div>
<div class="t h" style="top:781.00px;font-size:18.4px;color:#000;left:73.50px;letter-spacing:-0.393px;">Fixed Expenses</div>
<div class="t h" style="top:781.00px;font-size:18.4px;color:#000;right:2240.14px;letter-spacing:0.055px;">(84)</div>
<div class="t h" style="top:781.00px;font-size:18.4px;color:#000;right:2120.14px;letter-spacing:0.055px;">(84)</div>
<div class="t h" style="top:781.00px;font-size:18.4px;color:#000;right:2000.14px;letter-spacing:0.055px;">(84)</div>
<div class="t h" style="top:781.00px;font-size:18.4px;color:#000;right:1880.14px;letter-spacing:0.055px;">(84)</div>
<div class="t h" style="top:781.00px;font-size:18.4px;color:#000;right:1760.14px;letter-spacing:0.055px;">(84)</div>
<div class="t h" style="top:781.00px;font-size:18.4px;color:#000;right:1591.97px;letter-spacing:0.234px;">(7)</div>
<div class="t h" style="top:781.00px;font-size:18.4px;color:#000;right:1454.97px;letter-spacing:0.234px;">(7)</div>
<div class="t h" style="top:781.00px;font-size:18.4px;color:#000;right:1317.97px;letter-spacing:0.234px;">(7)</div>
<div class="t h" style="top:781.00px;font-size:18.4px;color:#000;right:1180.97px;letter-spacing:0.234px;">(7)</div>
<div class="t h" style="top:781.00px;font-size:18.4px;color:#000;right:1043.97px;letter-spacing:0.234px;">(7)</div>
<div class="t h" style="top:781.00px;font-size:18.4px;color:#000;right:906.97px;letter-spacing:0.234px;">(7)</div>
<div class="t h" style="top:781.00px;font-size:18.4px;color:#000;right:769.97px;letter-spacing:0.234px;">(7)</div>
<div class="t h" style="top:781.00px;font-size:18.4px;color:#000;right:632.97px;letter-spacing:0.234px;">(7)</div>
<div class="t h" style="top:781.00px;font-size:18.4px;color:#000;right:495.97px;letter-spacing:0.234px;">(7)</div>
<div class="t h" style="top:781.00px;font-size:18.4px;color:#000;right:358.97px;letter-spacing:0.234px;">(7)</div>
<div class="t h" style="top:781.00px;font-size:18.4px;color:#000;right:221.97px;letter-spacing:0.234px;">(7)</div>
<div class="t h" style="top:781.00px;font-size:18.4px;color:#000;right:84.97px;letter-spacing:0.234px;">(7)</div>
<div class="t h" style="top:804.00px;font-size:18.4px;color:#000;left:92.00px;font-style:italic;letter-spacing:-0.04px;">% of Revenue</div>
<div class="t h" style="top:804.00px;font-size:18.4px;color:#000;right:2240.87px;font-style:italic;letter-spacing:0.332px;">(200%)</div>
<div class="t h" style="top:804.00px;font-size:18.4px;color:#000;right:2120.70px;font-style:italic;letter-spacing:0.495px;">(57%)</div>
<div class="t h" style="top:804.00px;font-size:18.4px;color:#000;right:2000.70px;font-style:italic;letter-spacing:0.495px;">(23%)</div>
<div class="t h" style="top:804.00px;font-size:18.4px;color:#000;right:1880.70px;font-style:italic;letter-spacing:0.495px;">(11%)</div>
<div class="t h" style="top:804.00px;font-size:18.4px;color:#000;right:1760.46px;font-style:italic;letter-spacing:0.736px;">(5%)</div>
<div class="t h" style="top:804.00px;font-size:18.4px;color:#000;right:1592.87px;font-style:italic;letter-spacing:0.332px;">(957%)</div>
<div class="t h" style="top:804.00px;font-size:18.4px;color:#000;right:1455.87px;font-style:italic;letter-spacing:0.332px;">(442%)</div>
<div class="t h" style="top:804.00px;font-size:18.4px;color:#000;right:1318.87px;font-style:italic;letter-spacing:0.332px;">(274%)</div>
<div class="t h" style="top:804.00px;font-size:18.4px;color:#000;right:1181.87px;font-style:italic;letter-spacing:0.332px;">(239%)</div>
<div class="t h" style="top:804.00px;font-size:18.4px;color:#000;right:1044.87px;font-style:italic;letter-spacing:0.332px;">(213%)</div>
<div class="t h" style="top:804.00px;font-size:18.4px;color:#000;right:907.87px;font-style:italic;letter-spacing:0.332px;">(191%)</div>
<div class="t h" style="top:804.00px;font-size:18.4px;color:#000;right:770.87px;font-style:italic;letter-spacing:0.332px;">(174%)</div>
<div class="t h" style="top:804.00px;font-size:18.4px;color:#000;right:633.87px;font-style:italic;letter-spacing:0.332px;">(160%)</div>
<div class="t h" style="top:804.00px;font-size:18.4px;color:#000;right:496.87px;font-style:italic;letter-spacing:0.332px;">(151%)</div>
<div class="t h" style="top:804.00px;font-size:18.4px;color:#000;right:359.87px;font-style:italic;letter-spacing:0.332px;">(147%)</div>
<div class="t h" style="top:804.00px;font-size:18.4px;color:#000;right:222.87px;font-style:italic;letter-spacing:0.332px;">(147%)</div>
<div class="t h" style="top:804.00px;font-size:18.4px;color:#000;right:85.87px;font-style:italic;letter-spacing:0.332px;">(147%)</div>
<div style="left:70px;top:828px;width:1074.5px;height:26.7px;background:#4bb1e8;"></div>
<div style="left:1175px;top:828px;width:1644.5px;height:26.7px;background:#4bb1e8;"></div>
<div class="t h" style="top:833.00px;font-size:20.7px;color:#fff;left:85.00px;font-weight:bold;-webkit-text-stroke:0.25px;letter-spacing:0.768px;">EBITDA</div>
<div class="t h" style="top:833.50px;font-size:18.4px;color:#fff;right:2239.89px;font-weight:bold;-webkit-text-stroke:0.22px;letter-spacing:0.314px;">(189)</div>
<div class="t h" style="top:833.50px;font-size:18.4px;color:#fff;right:2119.89px;font-weight:bold;-webkit-text-stroke:0.22px;letter-spacing:0.314px;">(182)</div>
<div class="t h" style="top:833.50px;font-size:18.4px;color:#fff;right:1999.80px;font-weight:bold;-webkit-text-stroke:0.22px;letter-spacing:0.397px;">(53)</div>
<div class="t h" style="top:833.50px;font-size:18.4px;color:#fff;right:1887.82px;font-weight:bold;-webkit-text-stroke:0.22px;letter-spacing:-0.016px;">261</div>
<div class="t h" style="top:833.50px;font-size:18.4px;color:#fff;right:1767.82px;font-weight:bold;-webkit-text-stroke:0.22px;letter-spacing:-0.016px;">987</div>
<div class="t h" style="top:833.50px;font-size:18.4px;color:#fff;right:1591.80px;font-weight:bold;-webkit-text-stroke:0.22px;letter-spacing:0.397px;">(18)</div>
<div class="t h" style="top:833.50px;font-size:18.4px;color:#fff;right:1454.80px;font-weight:bold;-webkit-text-stroke:0.22px;letter-spacing:0.397px;">(17)</div>
<div class="t h" style="top:833.50px;font-size:18.4px;color:#fff;right:1317.80px;font-weight:bold;-webkit-text-stroke:0.22px;letter-spacing:0.397px;">(16)</div>
<div class="t h" style="top:833.50px;font-size:18.4px;color:#fff;right:1180.80px;font-weight:bold;-webkit-text-stroke:0.22px;letter-spacing:0.397px;">(16)</div>
<div class="t h" style="top:833.50px;font-size:18.4px;color:#fff;right:1043.80px;font-weight:bold;-webkit-text-stroke:0.22px;letter-spacing:0.397px;">(16)</div>
<div class="t h" style="top:833.50px;font-size:18.4px;color:#fff;right:906.80px;font-weight:bold;-webkit-text-stroke:0.22px;letter-spacing:0.397px;">(16)</div>
<div class="t h" style="top:833.50px;font-size:18.4px;color:#fff;right:769.80px;font-weight:bold;-webkit-text-stroke:0.22px;letter-spacing:0.397px;">(15)</div>
<div class="t h" style="top:833.50px;font-size:18.4px;color:#fff;right:632.80px;font-weight:bold;-webkit-text-stroke:0.22px;letter-spacing:0.397px;">(15)</div>
<div class="t h" style="top:833.50px;font-size:18.4px;color:#fff;right:495.80px;font-weight:bold;-webkit-text-stroke:0.22px;letter-spacing:0.397px;">(15)</div>
<div class="t h" style="top:833.50px;font-size:18.4px;color:#fff;right:358.80px;font-weight:bold;-webkit-text-stroke:0.22px;letter-spacing:0.397px;">(15)</div>
<div class="t h" style="top:833.50px;font-size:18.4px;color:#fff;right:221.80px;font-weight:bold;-webkit-text-stroke:0.22px;letter-spacing:0.397px;">(15)</div>
<div class="t h" style="top:833.50px;font-size:18.4px;color:#fff;right:84.80px;font-weight:bold;-webkit-text-stroke:0.22px;letter-spacing:0.397px;">(15)</div>
<div class="t h" style="top:858.00px;font-size:18.4px;color:#000;left:74.50px;font-style:italic;letter-spacing:0.684px;">EBITDA %</div>
<div class="t h" style="top:858.00px;font-size:18.4px;color:#000;right:2240.87px;font-style:italic;letter-spacing:0.332px;">(449%)</div>
<div class="t h" style="top:858.00px;font-size:18.4px;color:#000;right:2120.87px;font-style:italic;letter-spacing:0.332px;">(124%)</div>
<div class="t h" style="top:858.00px;font-size:18.4px;color:#000;right:2000.70px;font-style:italic;letter-spacing:0.495px;">(15%)</div>
<div class="t h" style="top:858.00px;font-size:18.4px;color:#000;right:1888.57px;font-style:italic;letter-spacing:0.429px;">33%</div>
<div class="t h" style="top:858.00px;font-size:18.4px;color:#000;right:1768.57px;font-style:italic;letter-spacing:0.429px;">59%</div>
<div class="t h" style="top:858.00px;font-size:18.4px;color:#000;right:1592.97px;font-style:italic;letter-spacing:0.229px;">(2,457%)</div>
<div class="t h" style="top:858.00px;font-size:18.4px;color:#000;right:1455.97px;font-style:italic;letter-spacing:0.229px;">(1,090%)</div>
<div class="t h" style="top:858.00px;font-size:18.4px;color:#000;right:1318.87px;font-style:italic;letter-spacing:0.332px;">(644%)</div>
<div class="t h" style="top:858.00px;font-size:18.4px;color:#000;right:1181.87px;font-style:italic;letter-spacing:0.332px;">(554%)</div>
<div class="t h" style="top:858.00px;font-size:18.4px;color:#000;right:1044.87px;font-style:italic;letter-spacing:0.332px;">(483%)</div>
<div class="t h" style="top:858.00px;font-size:18.4px;color:#000;right:907.87px;font-style:italic;letter-spacing:0.332px;">(427%)</div>
<div class="t h" style="top:858.00px;font-size:18.4px;color:#000;right:770.87px;font-style:italic;letter-spacing:0.332px;">(381%)</div>
<div class="t h" style="top:858.00px;font-size:18.4px;color:#000;right:633.87px;font-style:italic;letter-spacing:0.332px;">(342%)</div>
<div class="t h" style="top:858.00px;font-size:18.4px;color:#000;right:496.87px;font-style:italic;letter-spacing:0.332px;">(320%)</div>
<div class="t h" style="top:858.00px;font-size:18.4px;color:#000;right:359.87px;font-style:italic;letter-spacing:0.332px;">(310%)</div>
<div class="t h" style="top:858.00px;font-size:18.4px;color:#000;right:222.87px;font-style:italic;letter-spacing:0.332px;">(310%)</div>
<div class="t h" style="top:858.00px;font-size:18.4px;color:#000;right:85.87px;font-style:italic;letter-spacing:0.332px;">(310%)</div>
<div class="t h" style="top:881.00px;font-size:18.4px;color:#000;left:73.50px;letter-spacing:-0.503px;">Depreciation &amp; Amortization</div>
<div class="t h" style="top:881.00px;font-size:18.4px;color:#000;right:2239.97px;letter-spacing:0.234px;">(9)</div>
<div class="t h" style="top:881.00px;font-size:18.4px;color:#000;right:2120.14px;letter-spacing:0.055px;">(10)</div>
<div class="t h" style="top:881.00px;font-size:18.4px;color:#000;right:2000.14px;letter-spacing:0.055px;">(10)</div>
<div class="t h" style="top:881.00px;font-size:18.4px;color:#000;right:1880.14px;letter-spacing:0.055px;">(10)</div>
<div class="t h" style="top:881.00px;font-size:18.4px;color:#000;right:1760.14px;letter-spacing:0.055px;">(10)</div>
<div class="t h" style="top:881.00px;font-size:18.4px;color:#000;right:1591.97px;letter-spacing:0.234px;">(0)</div>
<div class="t h" style="top:881.00px;font-size:18.4px;color:#000;right:1454.97px;letter-spacing:0.234px;">(0)</div>
<div class="t h" style="top:881.00px;font-size:18.4px;color:#000;right:1317.97px;letter-spacing:0.234px;">(1)</div>
<div class="t h" style="top:881.00px;font-size:18.4px;color:#000;right:1180.97px;letter-spacing:0.234px;">(1)</div>
<div class="t h" style="top:881.00px;font-size:18.4px;color:#000;right:1043.97px;letter-spacing:0.234px;">(1)</div>
<div class="t h" style="top:881.00px;font-size:18.4px;color:#000;right:906.97px;letter-spacing:0.234px;">(1)</div>
<div class="t h" style="top:881.00px;font-size:18.4px;color:#000;right:769.97px;letter-spacing:0.234px;">(1)</div>
<div class="t h" style="top:881.00px;font-size:18.4px;color:#000;right:632.97px;letter-spacing:0.234px;">(1)</div>
<div class="t h" style="top:881.00px;font-size:18.4px;color:#000;right:495.97px;letter-spacing:0.234px;">(1)</div>
<div class="t h" style="top:881.00px;font-size:18.4px;color:#000;right:358.97px;letter-spacing:0.234px;">(1)</div>
<div class="t h" style="top:881.00px;font-size:18.4px;color:#000;right:221.97px;letter-spacing:0.234px;">(1)</div>
<div class="t h" style="top:881.00px;font-size:18.4px;color:#000;right:84.97px;letter-spacing:0.234px;">(1)</div>
<div class="t h" style="top:904.00px;font-size:18.4px;color:#000;left:73.50px;letter-spacing:0.801px;">EBIT</div>
<div class="t h" style="top:904.00px;font-size:18.4px;color:#000;right:2240.25px;letter-spacing:-0.053px;">(197)</div>
<div class="t h" style="top:904.00px;font-size:18.4px;color:#000;right:2120.25px;letter-spacing:-0.053px;">(192)</div>
<div class="t h" style="top:904.00px;font-size:18.4px;color:#000;right:2000.14px;letter-spacing:0.055px;">(63)</div>
<div class="t h" style="top:904.00px;font-size:18.4px;color:#000;right:1888.28px;letter-spacing:-0.48px;">251</div>
<div class="t h" style="top:904.00px;font-size:18.4px;color:#000;right:1768.28px;letter-spacing:-0.48px;">977</div>
<div class="t h" style="top:904.00px;font-size:18.4px;color:#000;right:1592.14px;letter-spacing:0.055px;">(18)</div>
<div class="t h" style="top:904.00px;font-size:18.4px;color:#000;right:1455.14px;letter-spacing:0.055px;">(18)</div>
<div class="t h" style="top:904.00px;font-size:18.4px;color:#000;right:1318.14px;letter-spacing:0.055px;">(17)</div>
<div class="t h" style="top:904.00px;font-size:18.4px;color:#000;right:1181.14px;letter-spacing:0.055px;">(17)</div>
<div class="t h" style="top:904.00px;font-size:18.4px;color:#000;right:1044.14px;letter-spacing:0.055px;">(17)</div>
<div class="t h" style="top:904.00px;font-size:18.4px;color:#000;right:907.14px;letter-spacing:0.055px;">(16)</div>
<div class="t h" style="top:904.00px;font-size:18.4px;color:#000;right:770.14px;letter-spacing:0.055px;">(16)</div>
<div class="t h" style="top:904.00px;font-size:18.4px;color:#000;right:633.14px;letter-spacing:0.055px;">(16)</div>
<div class="t h" style="top:904.00px;font-size:18.4px;color:#000;right:496.14px;letter-spacing:0.055px;">(16)</div>
<div class="t h" style="top:904.00px;font-size:18.4px;color:#000;right:359.14px;letter-spacing:0.055px;">(16)</div>
<div class="t h" style="top:904.00px;font-size:18.4px;color:#000;right:222.14px;letter-spacing:0.055px;">(16)</div>
<div class="t h" style="top:904.00px;font-size:18.4px;color:#000;right:85.14px;letter-spacing:0.055px;">(16)</div>
<div class="t h" style="top:927.00px;font-size:18.4px;color:#000;left:73.50px;letter-spacing:-0.359px;">Net Interest Expense</div>
<div class="t h" style="top:927.00px;font-size:18.4px;color:#000;right:2240.14px;letter-spacing:0.055px;">(18)</div>
<div class="t h" style="top:927.00px;font-size:18.4px;color:#000;right:2120.14px;letter-spacing:0.055px;">(17)</div>
<div class="t h" style="top:927.00px;font-size:18.4px;color:#000;right:2000.14px;letter-spacing:0.055px;">(14)</div>
<div class="t h" style="top:927.00px;font-size:18.4px;color:#000;right:1880.14px;letter-spacing:0.055px;">(11)</div>
<div class="t h" style="top:927.00px;font-size:18.4px;color:#000;right:1759.97px;letter-spacing:0.234px;">(7)</div>
<div class="t h" style="top:927.00px;font-size:18.4px;color:#000;right:1591.97px;letter-spacing:0.234px;">(1)</div>
<div class="t h" style="top:927.00px;font-size:18.4px;color:#000;right:1454.97px;letter-spacing:0.234px;">(1)</div>
<div class="t h" style="top:927.00px;font-size:18.4px;color:#000;right:1317.97px;letter-spacing:0.234px;">(2)</div>
<div class="t h" style="top:927.00px;font-size:18.4px;color:#000;right:1180.97px;letter-spacing:0.234px;">(2)</div>
<div class="t h" style="top:927.00px;font-size:18.4px;color:#000;right:1043.97px;letter-spacing:0.234px;">(2)</div>
<div class="t h" style="top:927.00px;font-size:18.4px;color:#000;right:906.97px;letter-spacing:0.234px;">(2)</div>
<div class="t h" style="top:927.00px;font-size:18.4px;color:#000;right:769.97px;letter-spacing:0.234px;">(2)</div>
<div class="t h" style="top:927.00px;font-size:18.4px;color:#000;right:632.97px;letter-spacing:0.234px;">(2)</div>
<div class="t h" style="top:927.00px;font-size:18.4px;color:#000;right:495.97px;letter-spacing:0.234px;">(2)</div>
<div class="t h" style="top:927.00px;font-size:18.4px;color:#000;right:358.97px;letter-spacing:0.234px;">(2)</div>
<div class="t h" style="top:927.00px;font-size:18.4px;color:#000;right:221.97px;letter-spacing:0.234px;">(2)</div>
<div class="t h" style="top:927.00px;font-size:18.4px;color:#000;right:84.97px;letter-spacing:0.234px;">(2)</div>
<div class="t h" style="top:950.00px;font-size:18.4px;color:#000;left:73.50px;letter-spacing:-0.03px;">Net Profit Before Tax</div>
<div class="t h" style="top:950.00px;font-size:18.4px;color:#000;right:2240.25px;letter-spacing:-0.053px;">(216)</div>
<div class="t h" style="top:950.00px;font-size:18.4px;color:#000;right:2120.25px;letter-spacing:-0.053px;">(209)</div>
<div class="t h" style="top:950.00px;font-size:18.4px;color:#000;right:2000.14px;letter-spacing:0.055px;">(77)</div>
<div class="t h" style="top:950.00px;font-size:18.4px;color:#000;right:1888.28px;letter-spacing:-0.48px;">241</div>
<div class="t h" style="top:950.00px;font-size:18.4px;color:#000;right:1768.28px;letter-spacing:-0.48px;">970</div>
<div class="t h" style="top:950.00px;font-size:18.4px;color:#000;right:1592.14px;letter-spacing:0.055px;">(19)</div>
<div class="t h" style="top:950.00px;font-size:18.4px;color:#000;right:1455.14px;letter-spacing:0.055px;">(19)</div>
<div class="t h" style="top:950.00px;font-size:18.4px;color:#000;right:1318.14px;letter-spacing:0.055px;">(19)</div>
<div class="t h" style="top:950.00px;font-size:18.4px;color:#000;right:1181.14px;letter-spacing:0.055px;">(19)</div>
<div class="t h" style="top:950.00px;font-size:18.4px;color:#000;right:1044.14px;letter-spacing:0.055px;">(18)</div>
<div class="t h" style="top:950.00px;font-size:18.4px;color:#000;right:907.14px;letter-spacing:0.055px;">(18)</div>
<div class="t h" style="top:950.00px;font-size:18.4px;color:#000;right:770.14px;letter-spacing:0.055px;">(18)</div>
<div class="t h" style="top:950.00px;font-size:18.4px;color:#000;right:633.14px;letter-spacing:0.055px;">(17)</div>
<div class="t h" style="top:950.00px;font-size:18.4px;color:#000;right:496.14px;letter-spacing:0.055px;">(17)</div>
<div class="t h" style="top:950.00px;font-size:18.4px;color:#000;right:359.14px;letter-spacing:0.055px;">(17)</div>
<div class="t h" style="top:950.00px;font-size:18.4px;color:#000;right:222.14px;letter-spacing:0.055px;">(17)</div>
<div class="t h" style="top:950.00px;font-size:18.4px;color:#000;right:85.14px;letter-spacing:0.055px;">(17)</div>
<div class="t h" style="top:973.00px;font-size:18.4px;color:#000;left:73.50px;letter-spacing:-0.106px;">Tax Expense</div>
<div class="t h" style="top:973.00px;font-size:18.4px;color:#000;right:2247.80px;letter-spacing:0.695px;">-</div>
<div class="t h" style="top:973.00px;font-size:18.4px;color:#000;right:2127.80px;letter-spacing:0.695px;">-</div>
<div class="t h" style="top:973.00px;font-size:18.4px;color:#000;right:2007.80px;letter-spacing:0.695px;">-</div>
<div class="t h" style="top:973.00px;font-size:18.4px;color:#000;right:1880.14px;letter-spacing:0.055px;">(60)</div>
<div class="t h" style="top:973.00px;font-size:18.4px;color:#000;right:1760.25px;letter-spacing:-0.053px;">(243)</div>
<div class="t h" style="top:973.00px;font-size:18.4px;color:#000;right:1599.81px;letter-spacing:0.695px;">-</div>
<div class="t h" style="top:973.00px;font-size:18.4px;color:#000;right:1462.81px;letter-spacing:0.695px;">-</div>
<div class="t h" style="top:973.00px;font-size:18.4px;color:#000;right:1325.81px;letter-spacing:0.695px;">-</div>
<div class="t h" style="top:973.00px;font-size:18.4px;color:#000;right:1188.81px;letter-spacing:0.695px;">-</div>
<div class="t h" style="top:973.00px;font-size:18.4px;color:#000;right:1051.81px;letter-spacing:0.695px;">-</div>
<div class="t h" style="top:973.00px;font-size:18.4px;color:#000;right:914.81px;letter-spacing:0.695px;">-</div>
<div class="t h" style="top:973.00px;font-size:18.4px;color:#000;right:777.80px;letter-spacing:0.695px;">-</div>
<div class="t h" style="top:973.00px;font-size:18.4px;color:#000;right:640.80px;letter-spacing:0.695px;">-</div>
<div class="t h" style="top:973.00px;font-size:18.4px;color:#000;right:503.80px;letter-spacing:0.695px;">-</div>
<div class="t h" style="top:973.00px;font-size:18.4px;color:#000;right:366.80px;letter-spacing:0.695px;">-</div>
<div class="t h" style="top:973.00px;font-size:18.4px;color:#000;right:229.80px;letter-spacing:0.695px;">-</div>
<div class="t h" style="top:973.00px;font-size:18.4px;color:#000;right:92.80px;letter-spacing:0.695px;">-</div>
<div style="left:70px;top:992px;width:1074.5px;height:26.7px;background:#4bb1e8;"></div>
<div style="left:1175px;top:992px;width:1644.5px;height:26.7px;background:#4bb1e8;"></div>
<div class="t h" style="top:997.00px;font-size:20.7px;color:#fff;left:85.00px;font-weight:bold;-webkit-text-stroke:0.25px;letter-spacing:0.169px;">Net Profit After Tax</div>
<div class="t h" style="top:997.50px;font-size:18.4px;color:#fff;right:2239.89px;font-weight:bold;-webkit-text-stroke:0.22px;letter-spacing:0.314px;">(216)</div>
<div class="t h" style="top:997.50px;font-size:18.4px;color:#fff;right:2119.89px;font-weight:bold;-webkit-text-stroke:0.22px;letter-spacing:0.314px;">(209)</div>
<div class="t h" style="top:997.50px;font-size:18.4px;color:#fff;right:1999.80px;font-weight:bold;-webkit-text-stroke:0.22px;letter-spacing:0.397px;">(77)</div>
<div class="t h" style="top:997.50px;font-size:18.4px;color:#fff;right:1887.82px;font-weight:bold;-webkit-text-stroke:0.22px;letter-spacing:-0.016px;">180</div>
<div class="t h" style="top:997.50px;font-size:18.4px;color:#fff;right:1767.82px;font-weight:bold;-webkit-text-stroke:0.22px;letter-spacing:-0.016px;">728</div>
<div class="t h" style="top:997.50px;font-size:18.4px;color:#fff;right:1591.80px;font-weight:bold;-webkit-text-stroke:0.22px;letter-spacing:0.397px;">(19)</div>
<div class="t h" style="top:997.50px;font-size:18.4px;color:#fff;right:1454.80px;font-weight:bold;-webkit-text-stroke:0.22px;letter-spacing:0.397px;">(19)</div>
<div class="t h" style="top:997.50px;font-size:18.4px;color:#fff;right:1317.80px;font-weight:bold;-webkit-text-stroke:0.22px;letter-spacing:0.397px;">(19)</div>
<div class="t h" style="top:997.50px;font-size:18.4px;color:#fff;right:1180.80px;font-weight:bold;-webkit-text-stroke:0.22px;letter-spacing:0.397px;">(19)</div>
<div class="t h" style="top:997.50px;font-size:18.4px;color:#fff;right:1043.80px;font-weight:bold;-webkit-text-stroke:0.22px;letter-spacing:0.397px;">(18)</div>
<div class="t h" style="top:997.50px;font-size:18.4px;color:#fff;right:906.80px;font-weight:bold;-webkit-text-stroke:0.22px;letter-spacing:0.397px;">(18)</div>
<div class="t h" style="top:997.50px;font-size:18.4px;color:#fff;right:769.80px;font-weight:bold;-webkit-text-stroke:0.22px;letter-spacing:0.397px;">(18)</div>
<div class="t h" style="top:997.50px;font-size:18.4px;color:#fff;right:632.80px;font-weight:bold;-webkit-text-stroke:0.22px;letter-spacing:0.397px;">(17)</div>
<div class="t h" style="top:997.50px;font-size:18.4px;color:#fff;right:495.80px;font-weight:bold;-webkit-text-stroke:0.22px;letter-spacing:0.397px;">(17)</div>
<div class="t h" style="top:997.50px;font-size:18.4px;color:#fff;right:358.80px;font-weight:bold;-webkit-text-stroke:0.22px;letter-spacing:0.397px;">(17)</div>
<div class="t h" style="top:997.50px;font-size:18.4px;color:#fff;right:221.80px;font-weight:bold;-webkit-text-stroke:0.22px;letter-spacing:0.397px;">(17)</div>
<div class="t h" style="top:997.50px;font-size:18.4px;color:#fff;right:84.80px;font-weight:bold;-webkit-text-stroke:0.22px;letter-spacing:0.397px;">(17)</div>
<div class="t h" style="top:1023.00px;font-size:18.4px;color:#000;left:92.00px;font-style:italic;letter-spacing:0.021px;">Net Profit After Tax %</div>
<div class="t h" style="top:1023.00px;font-size:18.4px;color:#000;right:2240.87px;font-style:italic;letter-spacing:0.332px;">(513%)</div>
<div class="t h" style="top:1023.00px;font-size:18.4px;color:#000;right:2120.87px;font-style:italic;letter-spacing:0.332px;">(142%)</div>
<div class="t h" style="top:1023.00px;font-size:18.4px;color:#000;right:2000.70px;font-style:italic;letter-spacing:0.495px;">(21%)</div>
<div class="t h" style="top:1023.00px;font-size:18.4px;color:#000;right:1888.57px;font-style:italic;letter-spacing:0.429px;">23%</div>
<div class="t h" style="top:1023.00px;font-size:18.4px;color:#000;right:1768.57px;font-style:italic;letter-spacing:0.429px;">43%</div>
<div class="t h" style="top:1023.00px;font-size:18.4px;color:#000;right:1592.97px;font-style:italic;letter-spacing:0.229px;">(2,611%)</div>
<div class="t h" style="top:1023.00px;font-size:18.4px;color:#000;right:1455.97px;font-style:italic;letter-spacing:0.229px;">(1,172%)</div>
<div class="t h" style="top:1023.00px;font-size:18.4px;color:#000;right:1318.87px;font-style:italic;letter-spacing:0.332px;">(739%)</div>
<div class="t h" style="top:1023.00px;font-size:18.4px;color:#000;right:1181.87px;font-style:italic;letter-spacing:0.332px;">(637%)</div>
<div class="t h" style="top:1023.00px;font-size:18.4px;color:#000;right:1044.87px;font-style:italic;letter-spacing:0.332px;">(558%)</div>
<div class="t h" style="top:1023.00px;font-size:18.4px;color:#000;right:907.87px;font-style:italic;letter-spacing:0.332px;">(494%)</div>
<div class="t h" style="top:1023.00px;font-size:18.4px;color:#000;right:770.87px;font-style:italic;letter-spacing:0.332px;">(442%)</div>
<div class="t h" style="top:1023.00px;font-size:18.4px;color:#000;right:633.87px;font-style:italic;letter-spacing:0.332px;">(398%)</div>
<div class="t h" style="top:1023.00px;font-size:18.4px;color:#000;right:496.87px;font-style:italic;letter-spacing:0.332px;">(373%)</div>
<div class="t h" style="top:1023.00px;font-size:18.4px;color:#000;right:359.87px;font-style:italic;letter-spacing:0.332px;">(361%)</div>
<div class="t h" style="top:1023.00px;font-size:18.4px;color:#000;right:222.87px;font-style:italic;letter-spacing:0.332px;">(361%)</div>
<div class="t h" style="top:1023.00px;font-size:18.4px;color:#000;right:85.87px;font-style:italic;letter-spacing:0.332px;">(360%)</div>
<div style="left:70px;top:1065.3px;width:1074.5px;height:35.4px;background:#4b4fd1;"></div>
<div style="left:1175px;top:1065.3px;width:1644.5px;height:35.4px;background:#4b4fd1;"></div>
<div class="t h" style="top:1070.00px;font-size:27.6px;color:#fff;left:7.43px;width:1200px;text-align:center;font-weight:bold;-webkit-text-stroke:0.33px;letter-spacing:0.363px;">Income Statement ($'000) - 5 years to December 2030</div>
<div class="t h" style="top:1070.00px;font-size:27.6px;color:#fff;left:1398.04px;width:1200px;text-align:center;font-weight:bold;-webkit-text-stroke:0.33px;letter-spacing:0.575px;">Income Statement ($'000) - 2026</div>
<div style="left:70px;top:1561.2px;width:1074.5px;height:35.4px;background:#4b4fd1;"></div>
<div style="left:1175px;top:1561.2px;width:1644.5px;height:35.4px;background:#4b4fd1;"></div>
<div class="t h" style="top:1565.00px;font-size:27.6px;color:#fff;left:8.36px;width:1200px;text-align:center;font-weight:bold;-webkit-text-stroke:0.33px;letter-spacing:0.221px;">Balance Sheet ($'000) - 5 years to December 2030</div>
<div class="t h" style="top:1565.00px;font-size:27.6px;color:#fff;left:1397.94px;width:1200px;text-align:center;font-weight:bold;-webkit-text-stroke:0.33px;letter-spacing:0.39px;">Balance Sheet ($'000) - 2026</div>
<div style="left:71px;top:1602.2px;width:472.8px;height:21.6px;background:#6c73e8;"></div>
<div class="t h" style="top:1605.00px;font-size:18.4px;color:#fff;left:81.50px;font-weight:bold;-webkit-text-stroke:0.22px;letter-spacing:-0.075px;">Year Ending</div>
<div style="left:545.2px;top:1602.2px;width:118.8px;height:21.6px;background:#6c73e8;"></div>
<div class="t h" style="top:1605.00px;font-size:18.4px;color:#fff;left:4.48px;width:1200px;text-align:center;font-weight:bold;-webkit-text-stroke:0.22px;letter-spacing:-0.641px;">2026</div>
<div style="left:665.2px;top:1602.2px;width:118.8px;height:21.6px;background:#6c73e8;"></div>
<div class="t h" style="top:1605.00px;font-size:18.4px;color:#fff;left:124.48px;width:1200px;text-align:center;font-weight:bold;-webkit-text-stroke:0.22px;letter-spacing:-0.641px;">2027</div>
<div style="left:785.2px;top:1602.2px;width:118.8px;height:21.6px;background:#6c73e8;"></div>
<div class="t h" style="top:1605.00px;font-size:18.4px;color:#fff;left:244.48px;width:1200px;text-align:center;font-weight:bold;-webkit-text-stroke:0.22px;letter-spacing:-0.641px;">2028</div>
<div style="left:905.2px;top:1602.2px;width:118.8px;height:21.6px;background:#6c73e8;"></div>
<div class="t h" style="top:1605.00px;font-size:18.4px;color:#fff;left:364.48px;width:1200px;text-align:center;font-weight:bold;-webkit-text-stroke:0.22px;letter-spacing:-0.641px;">2029</div>
<div style="left:1025.2px;top:1602.2px;width:118.8px;height:21.6px;background:#6c73e8;"></div>
<div class="t h" style="top:1605.00px;font-size:18.4px;color:#fff;left:484.48px;width:1200px;text-align:center;font-weight:bold;-webkit-text-stroke:0.22px;letter-spacing:-0.641px;">2030</div>
<div style="left:1176.0px;top:1602.2px;width:135.8px;height:21.6px;background:#6c73e8;"></div>
<div class="t h" style="top:1605.00px;font-size:18.4px;color:#fff;left:644.00px;width:1200px;text-align:center;font-weight:bold;-webkit-text-stroke:0.22px;">Jan</div>
<div style="left:1313.0px;top:1602.2px;width:135.8px;height:21.6px;background:#6c73e8;"></div>
<div class="t h" style="top:1605.00px;font-size:18.4px;color:#fff;left:781.00px;width:1200px;text-align:center;font-weight:bold;-webkit-text-stroke:0.22px;">Feb</div>
<div style="left:1450.0px;top:1602.2px;width:135.8px;height:21.6px;background:#6c73e8;"></div>
<div class="t h" style="top:1605.00px;font-size:18.4px;color:#fff;left:918.00px;width:1200px;text-align:center;font-weight:bold;-webkit-text-stroke:0.22px;">Mar</div>
<div style="left:1587.0px;top:1602.2px;width:135.8px;height:21.6px;background:#6c73e8;"></div>
<div class="t h" style="top:1605.00px;font-size:18.4px;color:#fff;left:1055.00px;width:1200px;text-align:center;font-weight:bold;-webkit-text-stroke:0.22px;">Apr</div>
<div style="left:1724.0px;top:1602.2px;width:135.8px;height:21.6px;background:#6c73e8;"></div>
<div class="t h" style="top:1605.00px;font-size:18.4px;color:#fff;left:1192.00px;width:1200px;text-align:center;font-weight:bold;-webkit-text-stroke:0.22px;">May</div>
<div style="left:1861.0px;top:1602.2px;width:135.8px;height:21.6px;background:#6c73e8;"></div>
<div class="t h" style="top:1605.00px;font-size:18.4px;color:#fff;left:1329.00px;width:1200px;text-align:center;font-weight:bold;-webkit-text-stroke:0.22px;">Jun</div>
<div style="left:1998.0px;top:1602.2px;width:135.8px;height:21.6px;background:#6c73e8;"></div>
<div class="t h" style="top:1605.00px;font-size:18.4px;color:#fff;left:1466.00px;width:1200px;text-align:center;font-weight:bold;-webkit-text-stroke:0.22px;">Jul</div>
<div style="left:2135.0px;top:1602.2px;width:135.8px;height:21.6px;background:#6c73e8;"></div>
<div class="t h" style="top:1605.00px;font-size:18.4px;color:#fff;left:1603.00px;width:1200px;text-align:center;font-weight:bold;-webkit-text-stroke:0.22px;">Aug</div>
<div style="left:2272.0px;top:1602.2px;width:135.8px;height:21.6px;background:#6c73e8;"></div>
<div class="t h" style="top:1605.00px;font-size:18.4px;color:#fff;left:1740.00px;width:1200px;text-align:center;font-weight:bold;-webkit-text-stroke:0.22px;">Sep</div>
<div style="left:2409.0px;top:1602.2px;width:135.8px;height:21.6px;background:#6c73e8;"></div>
<div class="t h" style="top:1605.00px;font-size:18.4px;color:#fff;left:1877.00px;width:1200px;text-align:center;font-weight:bold;-webkit-text-stroke:0.22px;">Oct</div>
<div style="left:2546.0px;top:1602.2px;width:135.8px;height:21.6px;background:#6c73e8;"></div>
<div class="t h" style="top:1605.00px;font-size:18.4px;color:#fff;left:2014.00px;width:1200px;text-align:center;font-weight:bold;-webkit-text-stroke:0.22px;">Nov</div>
<div style="left:2683.0px;top:1602.2px;width:135.8px;height:21.6px;background:#6c73e8;"></div>
<div class="t h" style="top:1605.00px;font-size:18.4px;color:#fff;left:2151.00px;width:1200px;text-align:center;font-weight:bold;-webkit-text-stroke:0.22px;">Dec</div>
<div class="t h" style="top:1633.00px;font-size:18.4px;color:#000;left:73.50px;letter-spacing:-0.441px;">Current Assets</div>
<div class="t h" style="top:1633.00px;font-size:18.4px;color:#000;right:2248.28px;letter-spacing:-0.48px;">686</div>
<div class="t h" style="top:1633.00px;font-size:18.4px;color:#000;right:2128.28px;letter-spacing:-0.48px;">445</div>
<div class="t h" style="top:1633.00px;font-size:18.4px;color:#000;right:2008.28px;letter-spacing:-0.48px;">334</div>
<div class="t h" style="top:1633.00px;font-size:18.4px;color:#000;right:1888.28px;letter-spacing:-0.48px;">480</div>
<div class="t h" style="top:1633.00px;font-size:18.4px;color:#000;right:1768.12px;letter-spacing:-0.32px;">1,174</div>
<div class="t h" style="top:1633.00px;font-size:18.4px;color:#000;right:1600.28px;letter-spacing:-0.48px;">875</div>
<div class="t h" style="top:1633.00px;font-size:18.4px;color:#000;right:1463.28px;letter-spacing:-0.48px;">838</div>
<div class="t h" style="top:1633.00px;font-size:18.4px;color:#000;right:1326.28px;letter-spacing:-0.48px;">860</div>
<div class="t h" style="top:1633.00px;font-size:18.4px;color:#000;right:1189.28px;letter-spacing:-0.48px;">838</div>
<div class="t h" style="top:1633.00px;font-size:18.4px;color:#000;right:1052.28px;letter-spacing:-0.48px;">816</div>
<div class="t h" style="top:1633.00px;font-size:18.4px;color:#000;right:915.28px;letter-spacing:-0.48px;">795</div>
<div class="t h" style="top:1633.00px;font-size:18.4px;color:#000;right:778.28px;letter-spacing:-0.48px;">776</div>
<div class="t h" style="top:1633.00px;font-size:18.4px;color:#000;right:641.28px;letter-spacing:-0.48px;">758</div>
<div class="t h" style="top:1633.00px;font-size:18.4px;color:#000;right:504.28px;letter-spacing:-0.48px;">740</div>
<div class="t h" style="top:1633.00px;font-size:18.4px;color:#000;right:367.28px;letter-spacing:-0.48px;">722</div>
<div class="t h" style="top:1633.00px;font-size:18.4px;color:#000;right:230.28px;letter-spacing:-0.48px;">704</div>
<div class="t h" style="top:1633.00px;font-size:18.4px;color:#000;right:93.28px;letter-spacing:-0.48px;">686</div>
<div class="t h" style="top:1656.00px;font-size:18.4px;color:#000;left:73.50px;letter-spacing:-0.324px;">Non-Current Assets</div>
<div class="t h" style="top:1656.00px;font-size:18.4px;color:#000;right:2248.28px;letter-spacing:-0.485px;">91</div>
<div class="t h" style="top:1656.00px;font-size:18.4px;color:#000;right:2128.28px;letter-spacing:-0.485px;">81</div>
<div class="t h" style="top:1656.00px;font-size:18.4px;color:#000;right:2008.28px;letter-spacing:-0.485px;">71</div>
<div class="t h" style="top:1656.00px;font-size:18.4px;color:#000;right:1888.28px;letter-spacing:-0.485px;">61</div>
<div class="t h" style="top:1656.00px;font-size:18.4px;color:#000;right:1768.28px;letter-spacing:-0.485px;">51</div>
<div class="t h" style="top:1656.00px;font-size:18.4px;color:#000;right:1600.28px;letter-spacing:-0.485px;">15</div>
<div class="t h" style="top:1656.00px;font-size:18.4px;color:#000;right:1463.28px;letter-spacing:-0.485px;">35</div>
<div class="t h" style="top:1656.00px;font-size:18.4px;color:#000;right:1326.28px;letter-spacing:-0.485px;">91</div>
<div class="t h" style="top:1656.00px;font-size:18.4px;color:#000;right:1189.28px;letter-spacing:-0.485px;">93</div>
<div class="t h" style="top:1656.00px;font-size:18.4px;color:#000;right:1052.28px;letter-spacing:-0.485px;">95</div>
<div class="t h" style="top:1656.00px;font-size:18.4px;color:#000;right:915.28px;letter-spacing:-0.485px;">96</div>
<div class="t h" style="top:1656.00px;font-size:18.4px;color:#000;right:778.29px;letter-spacing:-0.485px;">96</div>
<div class="t h" style="top:1656.00px;font-size:18.4px;color:#000;right:641.29px;letter-spacing:-0.485px;">95</div>
<div class="t h" style="top:1656.00px;font-size:18.4px;color:#000;right:504.29px;letter-spacing:-0.485px;">94</div>
<div class="t h" style="top:1656.00px;font-size:18.4px;color:#000;right:367.29px;letter-spacing:-0.485px;">93</div>
<div class="t h" style="top:1656.00px;font-size:18.4px;color:#000;right:230.29px;letter-spacing:-0.485px;">92</div>
<div class="t h" style="top:1656.00px;font-size:18.4px;color:#000;right:93.29px;letter-spacing:-0.485px;">91</div>
<div class="t d" style="top:1124.00px;font-size:16.8px;color:#000;left:377.80px;font-weight:bold;letter-spacing:-0.172px;">Revenue</div>
<div class="t d" style="top:1124.00px;font-size:16.8px;color:#000;left:543.80px;font-weight:bold;letter-spacing:0.438px;">EBITDA</div>
<div class="t d" style="top:1124.00px;font-size:16.8px;color:#000;left:706.30px;font-weight:bold;letter-spacing:-0.082px;">Net Profit After Tax</div>
<svg style="left:0px;top:0px;pointer-events:none;" width="2902" height="1762" viewBox="0 0 2902 1762"><line x1="70.5" y1="1159.50" x2="1043.3" y2="1159.50" stroke="#5cabd9" stroke-width="1" shape-rendering="crispEdges"/><line x1="70.5" y1="1227.50" x2="1043.3" y2="1227.50" stroke="#5cabd9" stroke-width="1" shape-rendering="crispEdges"/><line x1="70.5" y1="1294.50" x2="1043.3" y2="1294.50" stroke="#5cabd9" stroke-width="1" shape-rendering="crispEdges"/><line x1="70.5" y1="1361.50" x2="1043.3" y2="1361.50" stroke="#5cabd9" stroke-width="1" shape-rendering="crispEdges"/><line x1="70.5" y1="1429.50" x2="1043.3" y2="1429.50" stroke="#4a6aa6" stroke-width="1.2" shape-rendering="crispEdges"/><line x1="70.5" y1="1496.50" x2="1043.3" y2="1496.50" stroke="#5cabd9" stroke-width="1" shape-rendering="crispEdges"/><line x1="70.50" y1="1159.7" x2="70.50" y2="1496.7" stroke="#5cabd9" stroke-width="1" shape-rendering="crispEdges"/><line x1="264.50" y1="1159.7" x2="264.50" y2="1496.7" stroke="#5cabd9" stroke-width="1" shape-rendering="crispEdges"/><line x1="459.50" y1="1159.7" x2="459.50" y2="1496.7" stroke="#5cabd9" stroke-width="1" shape-rendering="crispEdges"/><line x1="653.50" y1="1159.7" x2="653.50" y2="1496.7" stroke="#5cabd9" stroke-width="1" shape-rendering="crispEdges"/><line x1="848.50" y1="1159.7" x2="848.50" y2="1496.7" stroke="#5cabd9" stroke-width="1" shape-rendering="crispEdges"/><line x1="1042.50" y1="1159.7" x2="1042.50" y2="1496.7" stroke="#5cabd9" stroke-width="1" shape-rendering="crispEdges"/><polyline points="166.6,1422.8 361.1,1408.7 555.7,1379.6 750.2,1320.7 944.8,1202.6" fill="none" stroke="#ec7a6e" stroke-width="3.2" stroke-linejoin="round" stroke-linecap="round"/><circle cx="166.6" cy="1422.8" r="5.4" fill="#ec7a6e"/><circle cx="361.1" cy="1408.7" r="5.4" fill="#ec7a6e"/><circle cx="555.7" cy="1379.6" r="5.4" fill="#ec7a6e"/><circle cx="750.2" cy="1320.7" r="5.4" fill="#ec7a6e"/><circle cx="944.8" cy="1202.6" r="5.4" fill="#ec7a6e"/><polyline points="166.6,1454.0 361.1,1453.0 555.7,1435.6 750.2,1393.3 944.8,1295.5" fill="none" stroke="#5b9a3d" stroke-width="3.2" stroke-linejoin="round" stroke-linecap="round"/><circle cx="166.6" cy="1454.0" r="5.4" fill="#5b9a3d"/><circle cx="361.1" cy="1453.0" r="5.4" fill="#5b9a3d"/><circle cx="555.7" cy="1435.6" r="5.4" fill="#5b9a3d"/><circle cx="750.2" cy="1393.3" r="5.4" fill="#5b9a3d"/><circle cx="944.8" cy="1295.5" r="5.4" fill="#5b9a3d"/><polyline points="166.6,1457.6 361.1,1456.7 555.7,1438.9 750.2,1404.2 944.8,1330.4" fill="none" stroke="#4a4fd0" stroke-width="3.2" stroke-linejoin="round" stroke-linecap="round"/><circle cx="166.6" cy="1457.6" r="5.4" fill="#4a4fd0"/><circle cx="361.1" cy="1456.7" r="5.4" fill="#4a4fd0"/><circle cx="555.7" cy="1438.9" r="5.4" fill="#4a4fd0"/><circle cx="750.2" cy="1404.2" r="5.4" fill="#4a4fd0"/><circle cx="944.8" cy="1330.4" r="5.4" fill="#4a4fd0"/><line x1="328" y1="1131.3" x2="374.5" y2="1131.3" stroke="#ec7a6e" stroke-width="3.2"/><circle cx="350.8" cy="1131.3" r="4" fill="#ec7a6e"/><line x1="489" y1="1131.3" x2="535.7" y2="1131.3" stroke="#5b9a3d" stroke-width="3.2"/><circle cx="512" cy="1131.3" r="4" fill="#5b9a3d"/><line x1="652.6" y1="1131.3" x2="698.4" y2="1131.3" stroke="#4a4fd0" stroke-width="3.2"/><circle cx="675" cy="1131.3" r="4" fill="#4a4fd0"/></svg>
<div class="t d" style="top:1152.00px;font-size:16.8px;color:#000;left:1066.00px;font-weight:bold;letter-spacing:-0.099px;">2,000</div>
<div class="t d" style="top:1219.00px;font-size:16.8px;color:#000;left:1066.00px;font-weight:bold;letter-spacing:-0.099px;">1,500</div>
<div class="t d" style="top:1287.00px;font-size:16.8px;color:#000;left:1066.00px;font-weight:bold;letter-spacing:-0.099px;">1,000</div>
<div class="t d" style="top:1354.00px;font-size:16.8px;color:#000;left:1066.00px;font-weight:bold;letter-spacing:0.323px;">500</div>
<div class="t d" style="top:1420.00px;font-size:16.8px;color:#000;left:1066.50px;font-weight:bold;">-</div>
<div class="t d" style="top:1489.00px;font-size:16.8px;color:#000;left:1060.80px;font-weight:bold;letter-spacing:0.505px;">(500)</div>
<div class="t d" style="top:1513.00px;font-size:16.8px;color:#000;left:-432.34px;width:1200px;text-align:center;font-weight:bold;letter-spacing:0.17px;">2026</div>
<div class="t d" style="top:1513.00px;font-size:16.8px;color:#000;left:-237.79px;width:1200px;text-align:center;font-weight:bold;letter-spacing:0.17px;">2027</div>
<div class="t d" style="top:1513.00px;font-size:16.8px;color:#000;left:-43.24px;width:1200px;text-align:center;font-weight:bold;letter-spacing:0.17px;">2028</div>
<div class="t d" style="top:1513.00px;font-size:16.8px;color:#000;left:151.31px;width:1200px;text-align:center;font-weight:bold;letter-spacing:0.17px;">2029</div>
<div class="t d" style="top:1513.00px;font-size:16.8px;color:#000;left:345.86px;width:1200px;text-align:center;font-weight:bold;letter-spacing:0.17px;">2030</div>
<div class="t d" style="top:1124.00px;font-size:16.8px;color:#000;left:1767.20px;font-weight:bold;letter-spacing:-0.129px;">Revenue</div>
<div class="t d" style="top:1124.00px;font-size:16.8px;color:#000;left:1933.60px;font-weight:bold;letter-spacing:0.488px;">EBITDA</div>
<div class="t d" style="top:1124.00px;font-size:16.8px;color:#000;left:2096.40px;font-weight:bold;letter-spacing:-0.082px;">Net Profit After Tax</div>
<svg style="left:0px;top:0px;pointer-events:none;" width="2902" height="1762" viewBox="0 0 2902 1762"><line x1="1175.5" y1="1160.00" x2="2752.3" y2="1160.00" stroke="#5cabd9" stroke-width="2" shape-rendering="crispEdges"/><line x1="1175.5" y1="1207.50" x2="2752.3" y2="1207.50" stroke="#5cabd9" stroke-width="1" shape-rendering="crispEdges"/><line x1="1175.5" y1="1256.50" x2="2752.3" y2="1256.50" stroke="#5cabd9" stroke-width="1" shape-rendering="crispEdges"/><line x1="1175.5" y1="1304.50" x2="2752.3" y2="1304.50" stroke="#5cabd9" stroke-width="1" shape-rendering="crispEdges"/><line x1="1175.5" y1="1352.50" x2="2752.3" y2="1352.50" stroke="#5cabd9" stroke-width="1" shape-rendering="crispEdges"/><line x1="1175.5" y1="1400.50" x2="2752.3" y2="1400.50" stroke="#5cabd9" stroke-width="1" shape-rendering="crispEdges"/><line x1="1175.5" y1="1448.50" x2="2752.3" y2="1448.50" stroke="#5cabd9" stroke-width="1" shape-rendering="crispEdges"/><line x1="1175.5" y1="1496.00" x2="2752.3" y2="1496.00" stroke="#5cabd9" stroke-width="2" shape-rendering="crispEdges"/><line x1="1175.50" y1="1159.8" x2="1175.50" y2="1496.5" stroke="#5cabd9" stroke-width="1" shape-rendering="crispEdges"/><line x1="1306.50" y1="1159.8" x2="1306.50" y2="1496.5" stroke="#5cabd9" stroke-width="1" shape-rendering="crispEdges"/><line x1="1437.50" y1="1159.8" x2="1437.50" y2="1496.5" stroke="#5cabd9" stroke-width="1" shape-rendering="crispEdges"/><line x1="1569.50" y1="1159.8" x2="1569.50" y2="1496.5" stroke="#5cabd9" stroke-width="1" shape-rendering="crispEdges"/><line x1="1700.50" y1="1159.8" x2="1700.50" y2="1496.5" stroke="#5cabd9" stroke-width="1" shape-rendering="crispEdges"/><line x1="1832.50" y1="1159.8" x2="1832.50" y2="1496.5" stroke="#5cabd9" stroke-width="1" shape-rendering="crispEdges"/><line x1="1963.50" y1="1159.8" x2="1963.50" y2="1496.5" stroke="#5cabd9" stroke-width="1" shape-rendering="crispEdges"/><line x1="2094.50" y1="1159.8" x2="2094.50" y2="1496.5" stroke="#5cabd9" stroke-width="1" shape-rendering="crispEdges"/><line x1="2226.50" y1="1159.8" x2="2226.50" y2="1496.5" stroke="#5cabd9" stroke-width="1" shape-rendering="crispEdges"/><line x1="2357.50" y1="1159.8" x2="2357.50" y2="1496.5" stroke="#5cabd9" stroke-width="1" shape-rendering="crispEdges"/><line x1="2489.50" y1="1159.8" x2="2489.50" y2="1496.5" stroke="#5cabd9" stroke-width="1" shape-rendering="crispEdges"/><line x1="2620.50" y1="1159.8" x2="2620.50" y2="1496.5" stroke="#5cabd9" stroke-width="1" shape-rendering="crispEdges"/><line x1="2752.00" y1="1159.8" x2="2752.00" y2="1496.5" stroke="#5cabd9" stroke-width="2" shape-rendering="crispEdges"/><polyline points="1239.5,1248.8 1370.9,1239.2 1502.3,1230.5 1633.7,1226.2 1765.1,1223.2 1896.5,1219.9 2027.9,1217.1 2159.3,1213.2 2290.7,1210.2 2422.1,1209.5 2553.5,1209.5 2684.9,1209.5" fill="none" stroke="#ec7a6e" stroke-width="3.2" stroke-linejoin="round" stroke-linecap="round"/><circle cx="1239.5" cy="1248.8" r="5.4" fill="#ec7a6e"/><circle cx="1370.9" cy="1239.2" r="5.4" fill="#ec7a6e"/><circle cx="1502.3" cy="1230.5" r="5.4" fill="#ec7a6e"/><circle cx="1633.7" cy="1226.2" r="5.4" fill="#ec7a6e"/><circle cx="1765.1" cy="1223.2" r="5.4" fill="#ec7a6e"/><circle cx="1896.5" cy="1219.9" r="5.4" fill="#ec7a6e"/><circle cx="2027.9" cy="1217.1" r="5.4" fill="#ec7a6e"/><circle cx="2159.3" cy="1213.2" r="5.4" fill="#ec7a6e"/><circle cx="2290.7" cy="1210.2" r="5.4" fill="#ec7a6e"/><circle cx="2422.1" cy="1209.5" r="5.4" fill="#ec7a6e"/><circle cx="2553.5" cy="1209.5" r="5.4" fill="#ec7a6e"/><circle cx="2684.9" cy="1209.5" r="5.4" fill="#ec7a6e"/><polyline points="1239.5,1428.0 1370.9,1421.2 1502.3,1413.2 1633.7,1411.5 1765.1,1408.5 1896.5,1405.8 2027.9,1402.7 2159.3,1399.8 2290.7,1397.5 2422.1,1396.8 2553.5,1396.8 2684.9,1396.8" fill="none" stroke="#5b9a3d" stroke-width="3.2" stroke-linejoin="round" stroke-linecap="round"/><circle cx="1239.5" cy="1428.0" r="5.4" fill="#5b9a3d"/><circle cx="1370.9" cy="1421.2" r="5.4" fill="#5b9a3d"/><circle cx="1502.3" cy="1413.2" r="5.4" fill="#5b9a3d"/><circle cx="1633.7" cy="1411.5" r="5.4" fill="#5b9a3d"/><circle cx="1765.1" cy="1408.5" r="5.4" fill="#5b9a3d"/><circle cx="1896.5" cy="1405.8" r="5.4" fill="#5b9a3d"/><circle cx="2027.9" cy="1402.7" r="5.4" fill="#5b9a3d"/><circle cx="2159.3" cy="1399.8" r="5.4" fill="#5b9a3d"/><circle cx="2290.7" cy="1397.5" r="5.4" fill="#5b9a3d"/><circle cx="2422.1" cy="1396.8" r="5.4" fill="#5b9a3d"/><circle cx="2553.5" cy="1396.8" r="5.4" fill="#5b9a3d"/><circle cx="2684.9" cy="1396.8" r="5.4" fill="#5b9a3d"/><polyline points="1239.5,1438.8 1370.9,1433.2 1502.3,1437.5 1633.7,1434.5 1765.1,1431.5 1896.5,1429.6 2027.9,1426.9 2159.3,1424.0 2290.7,1421.5 2422.1,1420.5 2553.5,1420.5 2684.9,1419.5" fill="none" stroke="#4a4fd0" stroke-width="3.2" stroke-linejoin="round" stroke-linecap="round"/><circle cx="1239.5" cy="1438.8" r="5.4" fill="#4a4fd0"/><circle cx="1370.9" cy="1433.2" r="5.4" fill="#4a4fd0"/><circle cx="1502.3" cy="1437.5" r="5.4" fill="#4a4fd0"/><circle cx="1633.7" cy="1434.5" r="5.4" fill="#4a4fd0"/><circle cx="1765.1" cy="1431.5" r="5.4" fill="#4a4fd0"/><circle cx="1896.5" cy="1429.6" r="5.4" fill="#4a4fd0"/><circle cx="2027.9" cy="1426.9" r="5.4" fill="#4a4fd0"/><circle cx="2159.3" cy="1424.0" r="5.4" fill="#4a4fd0"/><circle cx="2290.7" cy="1421.5" r="5.4" fill="#4a4fd0"/><circle cx="2422.1" cy="1420.5" r="5.4" fill="#4a4fd0"/><circle cx="2553.5" cy="1420.5" r="5.4" fill="#4a4fd0"/><circle cx="2684.9" cy="1419.5" r="5.4" fill="#4a4fd0"/><line x1="1718.5" y1="1131.3" x2="1764.5" y2="1131.3" stroke="#ec7a6e" stroke-width="3.2"/><circle cx="1740.6" cy="1131.3" r="4" fill="#ec7a6e"/><line x1="1879.5" y1="1131.3" x2="1925.7" y2="1131.3" stroke="#5b9a3d" stroke-width="3.2"/><circle cx="1902" cy="1131.3" r="4" fill="#5b9a3d"/><line x1="2042.4" y1="1131.3" x2="2088.6" y2="1131.3" stroke="#4a4fd0" stroke-width="3.2"/><circle cx="2065" cy="1131.3" r="4" fill="#4a4fd0"/></svg>
<div class="t d" style="top:1152.00px;font-size:16.8px;color:#000;left:2774.30px;font-weight:bold;">10</div>
<div class="t d" style="top:1200.00px;font-size:16.8px;color:#000;left:2774.30px;font-weight:bold;">5</div>
<div class="t d" style="top:1246.00px;font-size:16.8px;color:#000;left:2774.30px;font-weight:bold;">-</div>
<div class="t d" style="top:1296.00px;font-size:16.8px;color:#000;left:2768.80px;font-weight:bold;letter-spacing:0.661px;">(5)</div>
<div class="t d" style="top:1344.00px;font-size:16.8px;color:#000;left:2768.80px;font-weight:bold;letter-spacing:0.574px;">(10)</div>
<div class="t d" style="top:1392.00px;font-size:16.8px;color:#000;left:2768.80px;font-weight:bold;letter-spacing:0.574px;">(15)</div>
<div class="t d" style="top:1440.00px;font-size:16.8px;color:#000;left:2768.80px;font-weight:bold;letter-spacing:0.574px;">(20)</div>
<div class="t d" style="top:1488.00px;font-size:16.8px;color:#000;left:2768.80px;font-weight:bold;letter-spacing:0.574px;">(25)</div>
<div class="t d" style="top:1513.00px;font-size:16.8px;color:#000;left:641.03px;width:1200px;text-align:center;font-weight:bold;letter-spacing:1.061px;">Jan</div>
<div class="t d" style="top:1513.00px;font-size:16.8px;color:#000;left:772.00px;width:1200px;text-align:center;font-weight:bold;letter-spacing:0.204px;">Feb</div>
<div class="t d" style="top:1513.00px;font-size:16.8px;color:#000;left:903.16px;width:1200px;text-align:center;font-weight:bold;letter-spacing:-0.271px;">Mar</div>
<div class="t d" style="top:1513.00px;font-size:16.8px;color:#000;left:1034.72px;width:1200px;text-align:center;font-weight:bold;letter-spacing:0.04px;">Apr</div>
<div class="t d" style="top:1513.00px;font-size:16.8px;color:#000;left:1166.21px;width:1200px;text-align:center;font-weight:bold;letter-spacing:0.216px;">May</div>
<div class="t d" style="top:1513.00px;font-size:16.8px;color:#000;left:1298.04px;width:1200px;text-align:center;font-weight:bold;letter-spacing:1.086px;">Jun</div>
<div class="t d" style="top:1513.00px;font-size:16.8px;color:#000;left:1429.41px;width:1200px;text-align:center;font-weight:bold;letter-spacing:1.016px;">Jul</div>
<div class="t d" style="top:1513.00px;font-size:16.8px;color:#000;left:1560.29px;width:1200px;text-align:center;font-weight:bold;letter-spacing:-0.018px;">Aug</div>
<div class="t d" style="top:1513.00px;font-size:16.8px;color:#000;left:1691.70px;width:1200px;text-align:center;font-weight:bold;letter-spacing:0.005px;">Sep</div>
<div class="t d" style="top:1513.00px;font-size:16.8px;color:#000;left:1823.18px;width:1200px;text-align:center;font-weight:bold;letter-spacing:0.15px;">Oct</div>
<div class="t d" style="top:1513.00px;font-size:16.8px;color:#000;left:1954.56px;width:1200px;text-align:center;font-weight:bold;letter-spacing:0.128px;">Nov</div>
<div class="t d" style="top:1513.00px;font-size:16.8px;color:#000;left:2085.94px;width:1200px;text-align:center;font-weight:bold;letter-spacing:0.078px;">Dec</div>
<div style="left:11px;top:1670px;width:2880px;height:48px;background:#0a0a0a;"></div>
<div style="left:11px;top:1718px;width:2880px;height:32.5px;background:#141414;border-top:1px solid #2b2b2b;"></div>
<div style="left:0px;top:1750.5px;width:2902px;height:12px;background:#000;"></div>
<div style="left:2891px;top:0px;width:11px;height:1762px;background:#000;"></div>
<div style="left:2860px;top:278px;width:31px;height:1392px;background:#0a0a0a;"></div>
<div style="left:2861px;top:279.5px;width:28px;height:1390px;background:#141414;border-radius:13px;"></div>
<div style="left:2870px;top:304px;width:12px;height:529px;background:#9e9e9e;border-radius:6px;"></div>
<div class="t" style="top:1683.80px;font-size:21px;color:#fff;left:190.00px;transform:scaleX(0.9814);transform-origin:0 50%;">Contents</div>
<div style="left:299px;top:1676.3px;width:128px;height:35.5px;background:#fdf06a;border-radius:7px;"></div>
<div class="t" style="top:1684.30px;font-size:21px;color:#111;left:-237.00px;width:1200px;text-align:center;transform:scaleX(0.9734);transform-origin:50% 50%;">Dashboard</div>
<div style="left:440px;top:1676.3px;width:106px;height:35.5px;background:#fdf06a;border-radius:7px;"></div>
<div class="t" style="top:1684.30px;font-size:21px;color:#111;left:-107.00px;width:1200px;text-align:center;transform:scaleX(0.9279);transform-origin:50% 50%;">Revenue</div>
<div style="left:559px;top:1676.3px;width:158px;height:35.5px;background:#fdf06a;border-radius:7px;"></div>
<div class="t" style="top:1684.30px;font-size:21px;color:#111;left:38.00px;width:1200px;text-align:center;transform:scaleX(0.8912);transform-origin:50% 50%;">COGS &amp; OPEX</div>
<div style="left:730.3px;top:1676.3px;width:88.30000000000007px;height:35.5px;background:#fdf06a;border-radius:7px;"></div>
<div class="t" style="top:1684.30px;font-size:21px;color:#111;left:174.45px;width:1200px;text-align:center;transform:scaleX(0.9392);transform-origin:50% 50%;">Payroll</div>
<div style="left:832px;top:1676.3px;width:86.60000000000002px;height:35.5px;background:#fdf06a;border-radius:7px;"></div>
<div class="t" style="top:1684.30px;font-size:21px;color:#111;left:275.30px;width:1200px;text-align:center;transform:scaleX(0.8230);transform-origin:50% 50%;">CAPEX</div>
<div style="left:932.7px;top:1676.3px;width:112.29999999999995px;height:35.5px;background:#fdf06a;border-radius:7px;"></div>
<div class="t" style="top:1684.30px;font-size:21px;color:#111;left:388.85px;width:1200px;text-align:center;transform:scaleX(0.9500);transform-origin:50% 50%;">CapTable</div>
<div style="left:1058px;top:1676.3px;width:89.5px;height:35.5px;background:#fdf06a;border-radius:7px;"></div>
<div class="t" style="top:1684.30px;font-size:21px;color:#111;left:502.75px;width:1200px;text-align:center;transform:scaleX(0.9407);transform-origin:50% 50%;">Capital</div>
<div style="left:1161px;top:1676.3px;width:42px;height:35.5px;background:#4bb0e8;border-radius:7px;"></div>
<div class="t" style="top:1684.30px;font-size:21px;color:#111;left:582.00px;width:1200px;text-align:center;">IS</div>
<div style="left:1216.4px;top:1676.3px;width:47.09999999999991px;height:35.5px;background:#4bb0e8;border-radius:7px;"></div>
<div class="t" style="top:1684.30px;font-size:21px;color:#111;left:639.95px;width:1200px;text-align:center;">CF</div>
<div style="left:1277px;top:1676.3px;width:48.299999999999955px;height:35.5px;background:#4bb0e8;border-radius:7px;"></div>
<div class="t" style="top:1684.30px;font-size:21px;color:#111;left:701.15px;width:1200px;text-align:center;">BS</div>
<div style="left:1338.2px;top:1676.3px;width:114.79999999999995px;height:35.5px;background:#4bb0e8;border-radius:7px;"></div>
<div class="t" style="top:1684.30px;font-size:21px;color:#111;left:795.60px;width:1200px;text-align:center;transform:scaleX(0.9294);transform-origin:50% 50%;">Scenarios</div>
<div style="left:1465.8px;top:1676.3px;width:115.5px;height:35.5px;background:#4bb0e8;border-radius:7px;"></div>
<div class="t" style="top:1684.30px;font-size:21px;color:#111;left:923.55px;width:1200px;text-align:center;transform:scaleX(1.0173);transform-origin:50% 50%;">Valuation</div>
<div style="left:1720.8px;top:1676.3px;width:48.5px;height:35.5px;background:#4bb0e8;border-radius:7px;"></div>
<div class="t" style="top:1684.30px;font-size:21px;color:#111;left:1145.05px;width:1200px;text-align:center;">BE</div>
<div style="left:1782px;top:1676.3px;width:72px;height:35.5px;background:#4bb0e8;border-radius:7px;"></div>
<div class="t" style="top:1684.30px;font-size:21px;color:#111;left:1218.00px;width:1200px;text-align:center;transform:scaleX(0.8381);transform-origin:50% 50%;">ROIC</div>
<div style="left:1867px;top:1676.3px;width:85px;height:35.5px;background:#4bb0e8;border-radius:7px;"></div>
<div class="t" style="top:1684.30px;font-size:21px;color:#111;left:1309.50px;width:1200px;text-align:center;transform:scaleX(0.9214);transform-origin:50% 50%;">Charts</div>
<div style="left:1965px;top:1676.3px;width:64px;height:35.5px;background:#4bb0e8;border-radius:7px;"></div>
<div class="t" style="top:1684.30px;font-size:21px;color:#111;left:1397.00px;width:1200px;text-align:center;transform:scaleX(0.8116);transform-origin:50% 50%;">KPIs</div>
<div style="left:291.8px;top:1680px;width:1.4px;height:27.5px;background:#5a5a5a;"></div>
<div style="left:432.8px;top:1680px;width:1.4px;height:27.5px;background:#5a5a5a;"></div>
<div style="left:551.8px;top:1680px;width:1.4px;height:27.5px;background:#5a5a5a;"></div>
<div style="left:722.9499999999999px;top:1680px;width:1.4px;height:27.5px;background:#5a5a5a;"></div>
<div style="left:824.5999999999999px;top:1680px;width:1.4px;height:27.5px;background:#5a5a5a;"></div>
<div style="left:924.95px;top:1680px;width:1.4px;height:27.5px;background:#5a5a5a;"></div>
<div style="left:1050.8px;top:1680px;width:1.4px;height:27.5px;background:#5a5a5a;"></div>
<div style="left:1153.55px;top:1680px;width:1.4px;height:27.5px;background:#5a5a5a;"></div>
<div style="left:1209.0px;top:1680px;width:1.4px;height:27.5px;background:#5a5a5a;"></div>
<div style="left:1269.55px;top:1680px;width:1.4px;height:27.5px;background:#5a5a5a;"></div>
<div style="left:1331.05px;top:1680px;width:1.4px;height:27.5px;background:#5a5a5a;"></div>
<div style="left:1458.7px;top:1680px;width:1.4px;height:27.5px;background:#5a5a5a;"></div>
<div style="left:1774.95px;top:1680px;width:1.4px;height:27.5px;background:#5a5a5a;"></div>
<div style="left:1859.8px;top:1680px;width:1.4px;height:27.5px;background:#5a5a5a;"></div>
<div style="left:1957.8px;top:1680px;width:1.4px;height:27.5px;background:#5a5a5a;"></div>
<div style="left:1586.8px;top:1680px;width:1.4px;height:27.5px;background:#5a5a5a;"></div>
<div style="left:1713.8px;top:1680px;width:1.4px;height:27.5px;background:#5a5a5a;"></div>
<div style="left:2035.1px;top:1680px;width:1.4px;height:27.5px;background:#5a5a5a;"></div>
<div style="left:2042px;top:1676.3px;width:30px;height:35.5px;background:#4bb0e8;border-radius:7px 0 0 7px;overflow:hidden;"><div class="t" style="left:12px;top:8.23px;font-size:21px;color:#111;transform:scaleX(0.94);transform-origin:0 50%;">Sc</div></div>
<div style="left:1594.3px;top:1670px;width:113.7px;height:42px;background:linear-gradient(#ffffff 0%, #fbfdfe 35%, #cfe6f6 100%);border-radius:0 0 7px 7px;"></div>
<div class="t" style="top:1679.50px;font-size:21px;color:#1a1a1a;left:1607.00px;transform:scaleX(0.9882);transform-origin:0 50%;">Summary</div>
<div style="left:1606.3px;top:1704.5px;width:89.5px;height:3.2px;background:#1e8a4c;"></div>
<div style="left:2216px;top:1680px;width:643.5px;height:25.5px;background:#141414;border-radius:13px;"></div>
<div style="left:2242px;top:1687.3px;width:537px;height:11.8px;background:#9e9e9e;border-radius:6px;"></div>
<div class="t" style="top:1726.50px;font-size:16.5px;color:#e6e6e6;left:27.00px;transform:scaleX(0.8909);transform-origin:0 50%;">Ready</div>
<div class="t" style="top:1727.50px;font-size:16px;color:#fff;left:173.00px;font-weight:bold;transform:scaleX(0.9823);transform-origin:0 50%;">Accessibility: Investigate</div>
<div style="left:2445px;top:1719px;width:60px;height:31.5px;background:#262626;"></div>
<div class="t" style="top:1727.00px;font-size:17px;color:#e6e6e6;left:2840.50px;transform:scaleX(0.9119);transform-origin:0 50%;">115%</div>
<svg style="left:0px;top:0px;pointer-events:none;" width="2902" height="1762" viewBox="0 0 2902 1762"><path d="M2869.8 295 L2876.1 286.7 L2882.4 295 Z" fill="#9e9e9e" stroke="#9e9e9e" stroke-width="1.2" stroke-linejoin="round"/><path d="M2869.8 1655.3 L2876.1 1663.5 L2882.4 1655.3 Z" fill="#9e9e9e" stroke="#9e9e9e" stroke-width="1.2" stroke-linejoin="round"/><path d="M54 1684.5 L47 1692.5 L54 1700.5" fill="none" stroke="#8a8a8a" stroke-width="1.7" stroke-linejoin="round" stroke-linecap="round"/><path d="M96 1684.5 L103 1692.5 L96 1700.5" fill="none" stroke="#e0e0e0" stroke-width="1.7" stroke-linejoin="round" stroke-linecap="round"/><circle cx="2089.5" cy="1692.6" r="2.1" fill="#e6e6e6"/><circle cx="2095.5" cy="1692.6" r="2.1" fill="#e6e6e6"/><circle cx="2101.5" cy="1692.6" r="2.1" fill="#e6e6e6"/><path d="M2135 1692.6 H2151.8 M2143.4 1684.2 V1701" fill="none" stroke="#e6e6e6" stroke-width="1.6" stroke-linejoin="round" stroke-linecap="round"/><rect x="2190.3" y="1687.1" width="3" height="3" fill="#e6e6e6"/><rect x="2190.3" y="1692.8999999999999" width="3" height="3" fill="#e6e6e6"/><rect x="2190.3" y="1698.6999999999998" width="3" height="3" fill="#e6e6e6"/><path d="M2233 1686.5 L2224.5 1693 L2233 1699.5 Z" fill="#9e9e9e" stroke="#9e9e9e" stroke-width="1.5" stroke-linejoin="round"/><path d="M2842.5 1686.5 L2851.5 1693 L2842.5 1699.5 Z" fill="#9e9e9e" stroke="#9e9e9e" stroke-width="1.5" stroke-linejoin="round"/><path d="M100 1726.5 H120.5 V1731 M100 1726.5 V1743 H108 M100 1730.5 H120.5 M103.5 1735 H108 M103.5 1739 H107" fill="none" stroke="#e0e0e0" stroke-width="1.4" stroke-linejoin="round" stroke-linecap="round"/><circle cx="115" cy="1739" r="5.3" fill="none" stroke="#e0e0e0" stroke-width="1.4"/><circle cx="115" cy="1739" r="2.3" fill="#e0e0e0"/><circle cx="156" cy="1727.3" r="2.6" fill="none" stroke="#e6e6e6" stroke-width="1.4"/><path d="M147.5 1731 L153.5 1733 H158.5 L164.5 1731 M153.5 1733 V1738 L150 1745 M158.5 1733 V1737.5 M158.5 1738.5 L166.5 1745.5 M166.5 1738.5 L158.5 1745.5" fill="none" stroke="#e6e6e6" stroke-width="1.4" stroke-linejoin="round" stroke-linecap="round"/><rect x="2465" y="1725" width="18.5" height="18.5" fill="none" stroke="#f0f0f0" stroke-width="1.7"/><path d="M2471.2 1725 V1743.5 M2477.4 1725 V1743.5 M2465 1731.2 H2483.5 M2465 1737.4 H2483.5" fill="none" stroke="#f0f0f0" stroke-width="1.6" stroke-linejoin="round" stroke-linecap="round"/><rect x="2525" y="1725" width="20" height="18.5" fill="none" stroke="#f0f0f0" stroke-width="1.7"/><rect x="2530" y="1729.3" width="10" height="10" fill="none" stroke="#f0f0f0" stroke-width="1.4"/><path d="M2532.5 1732.5 H2537.5 M2532.5 1736 H2537.5" fill="none" stroke="#f0f0f0" stroke-width="1.2" stroke-linejoin="round" stroke-linecap="round"/><rect x="2585" y="1725" width="20" height="18.5" fill="none" stroke="#f0f0f0" stroke-width="1.7"/><path d="M2591.5 1725 V1734.5 M2598.5 1725 V1734.5 H2585" fill="none" stroke="#f0f0f0" stroke-width="1.6" stroke-linejoin="round" stroke-linecap="round"/><path d="M2633.5 1734.8 H2644.5" fill="none" stroke="#e0e0e0" stroke-width="1.4" stroke-linejoin="round" stroke-linecap="round"/><path d="M2653 1735 H2801" fill="none" stroke="#a0a0a0" stroke-width="1.5" stroke-linejoin="round" stroke-linecap="round"/><rect x="2727" y="1726" width="8" height="17" rx="1.5" fill="#b4b4b4"/><path d="M2809 1734.8 H2820.5 M2814.7 1729 V1740.5" fill="none" stroke="#e0e0e0" stroke-width="1.4" stroke-linejoin="round" stroke-linecap="round"/></svg>
</div>
</body></html>
